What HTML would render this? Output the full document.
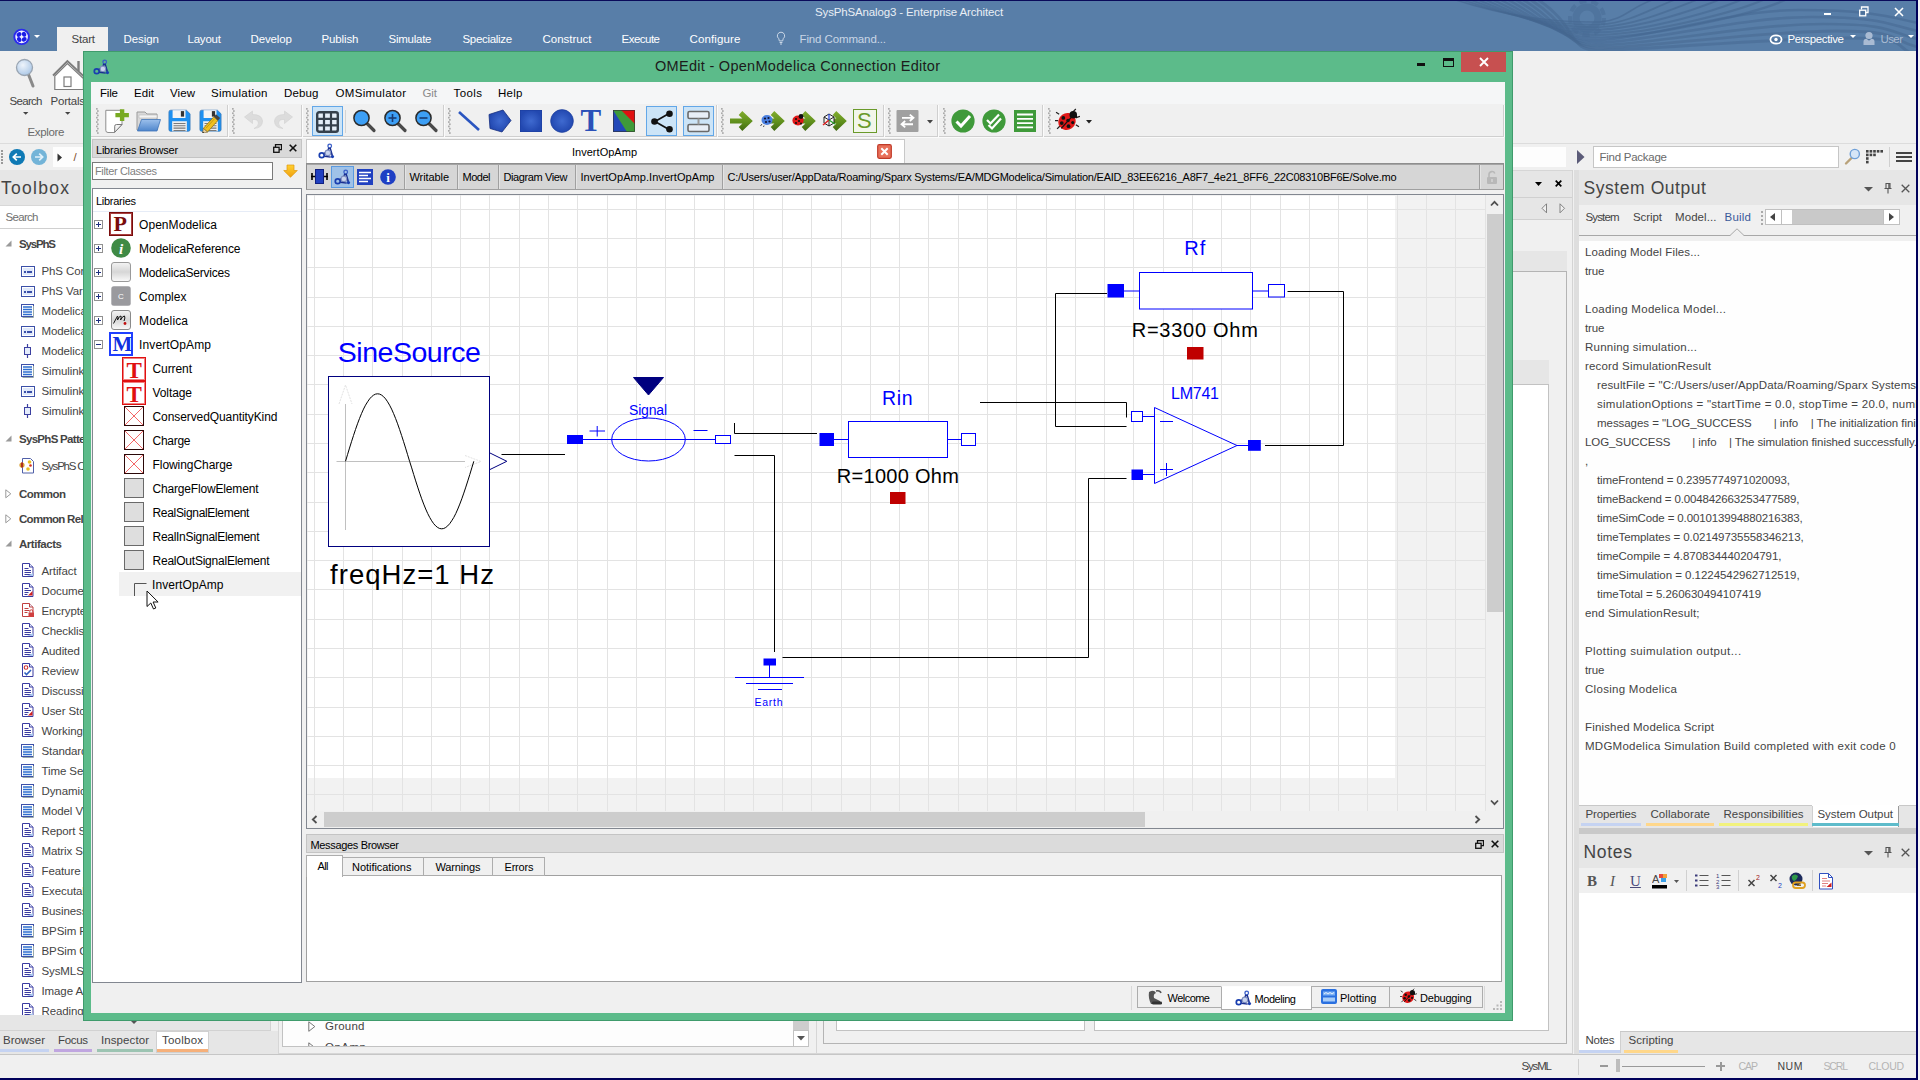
<!DOCTYPE html>
<html><head><meta charset="utf-8"><title>SysPhSAnalog3 - Enterprise Architect</title>
<style>
html,body{margin:0;padding:0;}
body{width:1920px;height:1080px;overflow:hidden;position:relative;background:#f0f0f0;font-family:"Liberation Sans",sans-serif;font-size:12px;}
body div,body svg,.t{position:absolute;box-sizing:border-box;}
.t{white-space:pre;}
</style></head>
<body>
<div style="left:0px;top:0px;width:1920px;height:1080px;background:#f0f0f0;"></div>
<div style="left:0px;top:0px;width:1917px;height:51px;background:#587ea8;"></div>
<div style="left:0px;top:0px;width:1920px;height:1px;background:#0a0a5a;"></div>
<div style="left:57px;top:27px;width:51px;height:24px;background:#f0f0f0;"></div>
<div style="left:0px;top:143px;width:1917px;height:1px;background:#dcdcdc;"></div>
<div style="left:0px;top:144px;width:1917px;height:26px;background:#f0f0f0;"></div>
<div style="left:1916px;top:0px;width:2px;height:1080px;background:#00005a;"></div>
<div style="left:1918px;top:0px;width:2px;height:1080px;background:#f4f4f4;"></div>
<div style="left:0px;top:1054px;width:1916px;height:1px;background:#c6c6c6;"></div>
<div style="left:0px;top:1055px;width:1916px;height:23px;background:#f0f0f0;"></div>
<div style="left:0px;top:1078px;width:1918px;height:2px;background:#00005a;"></div>
<svg style="left:1440px;top:1px;" width="476" height="50" viewBox="0 0 476 50"><g fill="none" stroke="#44668f"><path d="M16.0,-1 C56.0,12.0 105.0,22.0 160,21.0 C185.0,19.0 190.0,6.0 215.0,-2" stroke-width="1.60" opacity="0.60"/><path d="M23.5,-1 C63.5,13.2 107.0,24.6 160,23.6 C191.0,21.6 212.0,6.8 237.0,-2" stroke-width="1.72" opacity="0.59"/><path d="M31.0,-1 C71.0,14.4 109.0,27.2 160,26.2 C197.0,24.2 234.0,7.6 259.0,-2" stroke-width="1.84" opacity="0.58"/><path d="M38.5,-1 C78.5,15.6 111.0,29.8 160,28.8 C203.0,26.8 256.0,8.4 281.0,-2" stroke-width="1.96" opacity="0.56"/><path d="M46.0,-1 C86.0,16.8 113.0,32.4 160,31.4 C209.0,29.4 278.0,9.2 303.0,-2" stroke-width="2.08" opacity="0.55"/><path d="M53.5,-1 C93.5,18.0 115.0,35.0 160,34.0 C215.0,32.0 300.0,10.0 325.0,-2" stroke-width="2.20" opacity="0.54"/><path d="M61.0,-1 C101.0,19.2 117.0,37.6 160,36.6 C221.0,34.6 322.0,10.8 347.0,-2" stroke-width="2.32" opacity="0.53"/><path d="M68.5,-1 C108.5,20.4 119.0,40.2 160,39.2 C215.0,36.2 290.0,9.0 360.0,9.0 S450.0,16.0 478,22.0" stroke-width="2.44" opacity="0.52"/><path d="M76.0,-1 C116.0,21.6 121.0,42.8 160,41.8 C220.0,38.8 302.0,16.0 372.0,16.0 S450.0,24.0 478,30.0" stroke-width="2.56" opacity="0.50"/><path d="M83.5,-1 C123.5,22.8 123.0,45.4 160,44.4 C225.0,41.4 314.0,23.0 384.0,23.0 S450.0,32.0 478,38.0" stroke-width="2.68" opacity="0.49"/><path d="M91.0,-1 C131.0,24.0 125.0,48.0 160,47.0 C230.0,44.0 326.0,30.0 396.0,30.0 S450.0,40.0 478,46.0" stroke-width="2.80" opacity="0.48"/><path d="M98.5,-1 C138.5,25.2 127.0,50.6 160,49.6 C235.0,46.6 338.0,37.0 408.0,37.0 S450.0,48.0 478,54.0" stroke-width="2.92" opacity="0.47"/></g><g opacity=".5"><circle cx="147" cy="17" r="11" fill="none" stroke="#486b95" stroke-width="7"/><circle cx="147" cy="17" r="17" fill="none" stroke="#486b95" stroke-width="4" stroke-dasharray="7,5"/></g></svg>
<span class="t" style="left:815px;top:4.75px;font-size:11.5px;line-height:15.5px;color:#e9eef5;letter-spacing:-0.14px;">SysPhSAnalog3 - Enterprise Architect</span>
<span class="t" style="left:71.5px;top:31.75px;font-size:11.5px;line-height:15.5px;color:#444;letter-spacing:-0.20px;">Start</span>
<span class="t" style="left:123.5px;top:31.75px;font-size:11.5px;line-height:15.5px;color:#fff;letter-spacing:-0.06px;">Design</span>
<span class="t" style="left:187.5px;top:31.75px;font-size:11.5px;line-height:15.5px;color:#fff;letter-spacing:-0.21px;">Layout</span>
<span class="t" style="left:250.5px;top:31.75px;font-size:11.5px;line-height:15.5px;color:#fff;letter-spacing:-0.12px;">Develop</span>
<span class="t" style="left:321.5px;top:31.75px;font-size:11.5px;line-height:15.5px;color:#fff;letter-spacing:-0.12px;">Publish</span>
<span class="t" style="left:388.5px;top:31.75px;font-size:11.5px;line-height:15.5px;color:#fff;letter-spacing:-0.25px;">Simulate</span>
<span class="t" style="left:462.5px;top:31.75px;font-size:11.5px;line-height:15.5px;color:#fff;letter-spacing:-0.32px;">Specialize</span>
<span class="t" style="left:542.5px;top:31.75px;font-size:11.5px;line-height:15.5px;color:#fff;letter-spacing:-0.03px;">Construct</span>
<span class="t" style="left:621.5px;top:31.75px;font-size:11.5px;line-height:15.5px;color:#fff;letter-spacing:-0.51px;">Execute</span>
<span class="t" style="left:689.5px;top:31.75px;font-size:11.5px;line-height:15.5px;color:#fff;letter-spacing:0.14px;">Configure</span>
<span class="t" style="left:799.5px;top:31.75px;font-size:11.5px;line-height:15.5px;color:#c9d6e6;letter-spacing:-0.12px;">Find Command...</span>
<svg style="left:776px;top:31px;" width="10" height="15" viewBox="0 0 10 15"><path d="M5,1.2a3.6,3.6 0 0 1 2.2,6.5 l-.5,2.2 h-3.4 l-.5,-2.2 A3.6,3.6 0 0 1 5,1.2z" fill="none" stroke="#c9d6e6" stroke-width="1"/><path d="M3.6,11.5h2.8M4,13h2" stroke="#c9d6e6" stroke-width="1"/></svg>
<svg style="left:13px;top:28px;" width="18" height="18" viewBox="0 0 18 18"><circle cx="8.6" cy="8.9" r="8.2" fill="#2a2aee"/><circle cx="8.6" cy="8.9" r="6.3" fill="#f4f4ff"/><g fill="#1c1ce8"><ellipse cx="6" cy="6.5" rx="2.6" ry="2.1" transform="rotate(-35 6 6.5)"/><ellipse cx="11" cy="6.300" rx="2.100" ry="2.600" transform="rotate(-35 11 6.300)"/><ellipse cx="11.200" cy="11.300" rx="2.600" ry="2.100" transform="rotate(-35 11.200 11.300)"/><ellipse cx="6.200" cy="11.500" rx="2.100" ry="2.600" transform="rotate(-35 6.200 11.500)"/></g></svg>
<svg style="left:34px;top:35px;" width="7" height="4" viewBox="0 0 7 4"><path d="M0,0h6l-3,3z" fill="#fff"/></svg>
<svg style="left:1769px;top:32px;" width="14" height="14" viewBox="0 0 14 14"><ellipse cx="7" cy="7.5" rx="5.6" ry="4.2" fill="none" stroke="#fff" stroke-width="1.7"/><circle cx="7" cy="7.5" r="1.7" fill="#fff"/></svg>
<span class="t" style="left:1787.5px;top:31.75px;font-size:11.5px;line-height:15.5px;color:#fff;letter-spacing:-0.36px;">Perspective</span>
<svg style="left:1850px;top:35px;" width="7" height="4" viewBox="0 0 7 4"><path d="M0,0h6l-3,3z" fill="#fff"/></svg>
<svg style="left:1863px;top:31px;" width="12" height="15" viewBox="0 0 12 15"><circle cx="6" cy="4.5" r="3.6" fill="#a9bbd3"/><path d="M0.5,14 v-3.5 q0,-2.5 3,-2.8 l2.5,2 l2.5,-2 q3,.3 3,2.8 v3.5z" fill="#a9bbd3"/></svg>
<span class="t" style="left:1880.5px;top:31.75px;font-size:11.5px;line-height:15.5px;color:#a9bbd3;letter-spacing:-0.59px;">User</span>
<svg style="left:1908px;top:35px;" width="7" height="4" viewBox="0 0 7 4"><path d="M0,0h6l-3,3z" fill="#fff"/></svg>
<div style="left:1824px;top:13px;width:7px;height:2px;background:#fff;"></div>
<svg style="left:1859px;top:6px;" width="10" height="11" viewBox="0 0 10 11"><path d="M2.5,3.5v-2.5h6.5v5.5h-2.5" fill="none" stroke="#fff" stroke-width="1.3"/><rect x="0.7" y="4.2" width="6" height="5.6" fill="none" stroke="#fff" stroke-width="1.3"/></svg>
<svg style="left:1894px;top:7px;" width="10" height="10" viewBox="0 0 10 10"><path d="M1,1l8,8M9,1l-8,8" stroke="#fff" stroke-width="1.6"/></svg>
<svg style="left:12px;top:56px;" width="26" height="36" viewBox="0 0 26 36"><defs><radialGradient id="lens" cx=".4" cy=".35" r=".7"><stop offset="0" stop-color="#eef4fb"/><stop offset="1" stop-color="#a9c6e6"/></radialGradient></defs>
      <path d="M16.5,18.5 L21,30" stroke="#8a8a8a" stroke-width="3" stroke-linecap="round"/>
      <circle cx="12.5" cy="11.5" r="8" fill="url(#lens)" stroke="#9aa5b2" stroke-width="1.3"/></svg>
<svg style="left:50px;top:56px;" width="34" height="36" viewBox="0 0 34 36"><path d="M4.8,33.5 v-13.5 l12.600,-12.500 l16,15 v11z" fill="#fff" stroke="#7d7d7d" stroke-width="1.2"/>
      <path d="M3,19.500 L17.400,5 L34,20.500" fill="none" stroke="#7d7d7d" stroke-width="1.8"/>
      <path d="M28.500,5 v10" stroke="#7d7d7d" stroke-width="2.4"/>
      <rect x="14" y="21" width="7" height="9.500" fill="#fff" stroke="#7d7d7d" stroke-width="1.2"/></svg>
<span class="t" style="left:9.5px;top:93.75px;font-size:11.5px;line-height:15.5px;color:#444;letter-spacing:-0.69px;">Search</span>
<span class="t" style="left:50.5px;top:93.75px;font-size:11.5px;line-height:15.5px;color:#444;letter-spacing:-0.22px;">Portals</span>
<svg style="left:23px;top:112px;" width="6" height="4" viewBox="0 0 6 4"><path d="M0,0h5.4l-2.7,2.8z" fill="#444"/></svg>
<svg style="left:65px;top:112px;" width="6" height="4" viewBox="0 0 6 4"><path d="M0,0h5.4l-2.7,2.8z" fill="#444"/></svg>
<span class="t" style="left:27.5px;top:125.25px;font-size:11.5px;line-height:15.5px;color:#6a6a6a;letter-spacing:-0.33px;">Explore</span>
<div style="left:1px;top:150px;width:2px;height:1.5px;background:#9a9a9a;"></div>
<div style="left:1px;top:153px;width:2px;height:1.5px;background:#9a9a9a;"></div>
<div style="left:1px;top:156px;width:2px;height:1.5px;background:#9a9a9a;"></div>
<div style="left:1px;top:159px;width:2px;height:1.5px;background:#9a9a9a;"></div>
<div style="left:1px;top:162px;width:2px;height:1.5px;background:#9a9a9a;"></div>
<svg style="left:9px;top:149px;" width="16" height="16" viewBox="0 0 16 16"><circle cx="8" cy="8" r="8" fill="#0f7ab5"/><path d="M12,8H4.5M7.8,4.6L4.3,8l3.5,3.4" fill="none" stroke="#fff" stroke-width="1.7"/></svg>
<svg style="left:31px;top:149px;" width="16" height="16" viewBox="0 0 16 16"><circle cx="8" cy="8" r="8" fill="#73b4d8"/><path d="M4,8h7.5M8.2,4.6L11.7,8l-3.5,3.4" fill="none" stroke="#dff0fa" stroke-width="1.7"/></svg>
<div style="left:53px;top:147px;width:1513px;height:20px;background:#fdfdfd;"></div>
<svg style="left:57px;top:153px;" width="6" height="9" viewBox="0 0 6 9"><path d="M0.5,0.5v8l4.5,-4z" fill="#333"/></svg>
<span class="t" style="left:73.5px;top:149.75px;font-size:11.5px;line-height:15.5px;color:#7a4a2a;">/</span>
<svg style="left:1577px;top:150px;" width="8" height="14" viewBox="0 0 8 14"><path d="M0,0v14l7.5,-7z" fill="#5b5b78"/></svg>
<div style="left:1593px;top:146px;width:246px;height:22px;background:#fff;border:1px solid #c6c6c6;"></div>
<span class="t" style="left:1599.5px;top:149.75px;font-size:11.5px;line-height:15.5px;color:#6a6a6a;letter-spacing:-0.26px;">Find Package</span>
<svg style="left:1843px;top:148px;" width="18" height="18" viewBox="0 0 18 18"><path d="M3,15.5l6.5,-6.5" stroke="#b9a27a" stroke-width="2.4" stroke-linecap="round"/><circle cx="11.8" cy="6" r="4.6" fill="#d6e6f7" stroke="#6fa0d8" stroke-width="1.4"/></svg>
<svg style="left:1866px;top:150px;" width="18" height="14" viewBox="0 0 18 14"><rect x="0" y="0" width="2.6" height="2.6" fill="#444"/><rect x="3.6" y="0" width="2.6" height="2.6" fill="#444"/><rect x="7.2" y="0" width="2.6" height="2.6" fill="#444"/><rect x="10.8" y="0" width="2.6" height="2.6" fill="#444"/><rect x="14.4" y="0" width="2.6" height="2.6" fill="#444"/><rect x="0" y="3.6" width="2.6" height="2.6" fill="#444"/><rect x="0" y="7.2" width="2.6" height="2.6" fill="#444"/><rect x="0" y="10.8" width="2.6" height="2.6" fill="#444"/><rect x="3.6" y="3.6" width="2.6" height="2.6" fill="#444"/><rect x="7.2" y="3.6" width="2.6" height="2.6" fill="#444"/></svg>
<div style="left:1889px;top:147px;width:1px;height:20px;background:#d0d0d0;"></div>
<div style="left:1896px;top:152px;width:16px;height:2px;background:#444;"></div>
<div style="left:1896px;top:156px;width:16px;height:2px;background:#444;"></div>
<div style="left:1896px;top:160px;width:16px;height:2px;background:#444;"></div>
<div style="left:0;top:170px;width:83px;height:884px;overflow:hidden;">
<div style="left:0px;top:0px;width:83px;height:36px;background:#e6e6e6;"></div>
<div style="left:0px;top:35px;width:83px;height:1px;background:#d8d8d8;"></div>
<span class="t" style="left:1px;top:7.75px;font-size:17.5px;line-height:21.5px;color:#444;letter-spacing:1.28px;">Toolbox</span>
<div style="left:0px;top:36px;width:83px;height:22px;background:#fff;"></div>
<span class="t" style="left:5.5px;top:39.75px;font-size:11.5px;line-height:15.5px;color:#707070;letter-spacing:-0.69px;">Search</span>
<div style="left:0px;top:58px;width:83px;height:1px;background:#d0d0d0;"></div>
<div style="left:0px;top:59px;width:83px;height:786px;background:#fff;"></div>
<svg style="left:5px;top:70px;" width="7" height="7" viewBox="0 0 7 7"><path d="M6.5,.5v6h-6z" fill="#9a9a9a"/></svg>
<span class="t" style="left:19px;top:67.25px;font-size:11.5px;line-height:15.5px;color:#444;font-weight:bold;letter-spacing:-1.17px;">SysPhS</span>
<svg style="left:21px;top:96px;" width="14" height="12" viewBox="0 0 14 12"><rect x=".5" y=".5" width="13" height="10" fill="#fff" stroke="#3c50a8"/><rect x="2" y="2" width="10" height="7" fill="#dfe8fa"/><rect x="3" y="5" width="2" height="2" fill="#3c50a8"/><rect x="6" y="5" width="5" height="2" fill="#3c50a8"/></svg>
<span class="t" style="left:41.5px;top:93.75px;font-size:11.5px;line-height:15.5px;color:#444;letter-spacing:-0.1px;">PhS Constant</span>
<svg style="left:21px;top:116px;" width="14" height="12" viewBox="0 0 14 12"><rect x=".5" y=".5" width="13" height="10" fill="#fff" stroke="#3c50a8"/><rect x="2" y="2" width="10" height="7" fill="#dfe8fa"/><rect x="3" y="5" width="2" height="2" fill="#3c50a8"/><rect x="6" y="5" width="5" height="2" fill="#3c50a8"/></svg>
<span class="t" style="left:41.5px;top:113.75px;font-size:11.5px;line-height:15.5px;color:#444;letter-spacing:-0.1px;">PhS Variable</span>
<svg style="left:21px;top:134px;" width="14" height="14" viewBox="0 0 14 14"><rect x=".5" y=".5" width="12" height="12" fill="#fff" stroke="#3c50a8"/><path d="M2,3h9M2,5.5h9M2,8h9M2,10.5h9" stroke="#2f6fd0" stroke-width="1.3"/><path d="M12.5,2v11.5h-11" fill="none" stroke="#9aa" stroke-width="1"/></svg>
<span class="t" style="left:41.5px;top:133.75px;font-size:11.5px;line-height:15.5px;color:#444;letter-spacing:-0.1px;">ModelicaBlock</span>
<svg style="left:21px;top:156px;" width="14" height="12" viewBox="0 0 14 12"><rect x=".5" y=".5" width="13" height="10" fill="#fff" stroke="#3c50a8"/><rect x="2" y="2" width="10" height="7" fill="#dfe8fa"/><rect x="3" y="5" width="2" height="2" fill="#3c50a8"/><rect x="6" y="5" width="5" height="2" fill="#3c50a8"/></svg>
<span class="t" style="left:41.5px;top:153.75px;font-size:11.5px;line-height:15.5px;color:#444;letter-spacing:-0.1px;">ModelicaParameter</span>
<svg style="left:21px;top:174px;" width="14" height="14" viewBox="0 0 14 14"><path d="M6.5,0v14" stroke="#3c40a0" stroke-width="1.2"/><rect x="3.5" y="3.5" width="6" height="7" fill="#e4ecfb" stroke="#3c40a0"/></svg>
<span class="t" style="left:41.5px;top:173.75px;font-size:11.5px;line-height:15.5px;color:#444;letter-spacing:-0.1px;">ModelicaPort</span>
<svg style="left:21px;top:194px;" width="14" height="14" viewBox="0 0 14 14"><rect x=".5" y=".5" width="12" height="12" fill="#fff" stroke="#3c50a8"/><path d="M2,3h9M2,5.5h9M2,8h9M2,10.5h9" stroke="#2f6fd0" stroke-width="1.3"/><path d="M12.5,2v11.5h-11" fill="none" stroke="#9aa" stroke-width="1"/></svg>
<span class="t" style="left:41.5px;top:193.75px;font-size:11.5px;line-height:15.5px;color:#444;letter-spacing:-0.1px;">SimulinkBlock</span>
<svg style="left:21px;top:216px;" width="14" height="12" viewBox="0 0 14 12"><rect x=".5" y=".5" width="13" height="10" fill="#fff" stroke="#3c50a8"/><rect x="2" y="2" width="10" height="7" fill="#dfe8fa"/><rect x="3" y="5" width="2" height="2" fill="#3c50a8"/><rect x="6" y="5" width="5" height="2" fill="#3c50a8"/></svg>
<span class="t" style="left:41.5px;top:213.75px;font-size:11.5px;line-height:15.5px;color:#444;letter-spacing:-0.1px;">SimulinkParameter</span>
<svg style="left:21px;top:234px;" width="14" height="14" viewBox="0 0 14 14"><path d="M6.5,0v14" stroke="#3c40a0" stroke-width="1.2"/><rect x="3.5" y="3.5" width="6" height="7" fill="#e4ecfb" stroke="#3c40a0"/></svg>
<span class="t" style="left:41.5px;top:233.75px;font-size:11.5px;line-height:15.5px;color:#444;letter-spacing:-0.1px;">SimulinkPort</span>
<svg style="left:5px;top:265px;" width="7" height="7" viewBox="0 0 7 7"><path d="M6.5,.5v6h-6z" fill="#9a9a9a"/></svg>
<span class="t" style="left:19px;top:262.25px;font-size:11.5px;line-height:15.5px;color:#444;font-weight:bold;letter-spacing:-0.7px;">SysPhS Patterns</span>
<svg style="left:19px;top:288px;" width="16" height="16" viewBox="0 0 16 16"><path d="M3.5,.5h8l3,3v11.5h-11z" fill="#fff" stroke="#5060a8"/><circle cx="3" cy="7" r="2.6" fill="#d8a030"/><circle cx="10.5" cy="4" r="1.8" fill="#e8c020"/><circle cx="9" cy="11" r="1.8" fill="#e8c020"/><path d="M3,4.5v5" stroke="#b03020" stroke-width="2"/><circle cx="11.5" cy="7.5" r="1.3" fill="#d03020"/></svg>
<span class="t" style="left:41.5px;top:288.75px;font-size:11.5px;line-height:15.5px;color:#444;letter-spacing:-1.18px;">SysPhS Component</span>
<svg style="left:5px;top:319px;" width="7" height="10" viewBox="0 0 7 10"><path d="M.8,.8v8l5,-4z" fill="#fff" stroke="#9a9a9a"/></svg>
<span class="t" style="left:19px;top:317.25px;font-size:11.5px;line-height:15.5px;color:#444;font-weight:bold;letter-spacing:-0.57px;">Common</span>
<svg style="left:5px;top:344px;" width="7" height="10" viewBox="0 0 7 10"><path d="M.8,.8v8l5,-4z" fill="#fff" stroke="#9a9a9a"/></svg>
<span class="t" style="left:19px;top:342.25px;font-size:11.5px;line-height:15.5px;color:#444;font-weight:bold;letter-spacing:-0.7px;">Common Relationships</span>
<svg style="left:5px;top:370px;" width="7" height="7" viewBox="0 0 7 7"><path d="M6.5,.5v6h-6z" fill="#9a9a9a"/></svg>
<span class="t" style="left:19px;top:367.25px;font-size:11.5px;line-height:15.5px;color:#444;font-weight:bold;letter-spacing:-0.46px;">Artifacts</span>
<svg style="left:21px;top:393px;" width="14" height="15" viewBox="0 0 14 15"><path d="M1.5,.5h7l3.5,3.5v9.5h-10.5z" fill="#fff" stroke="#3a3aa0"/><path d="M8.5,.5v3.5h3.5" fill="#dfe6f7" stroke="#3a3aa0"/><path d="M3.5,5.5h4M3.5,7.5h6.5M3.5,9.5h6.5M3.5,11.5h6.5" stroke="#3a3aa0" stroke-width="1"/><path d="M6,13l6,-3v3z" fill="#a9c6ee"/></svg>
<span class="t" style="left:41.5px;top:393.75px;font-size:11.5px;line-height:15.5px;color:#444;letter-spacing:-0.1px;">Artifact</span>
<svg style="left:21px;top:413px;" width="14" height="15" viewBox="0 0 14 15"><path d="M1.5,.5h7l3.5,3.5v9.5h-10.5z" fill="#fff" stroke="#3a3aa0"/><path d="M8.5,.5v3.5h3.5" fill="#dfe6f7" stroke="#3a3aa0"/><path d="M3.5,5.5h4M3.5,7.5h6.5M3.5,9.5h4M3.5,11.5h3" stroke="#3a3aa0" stroke-width="1"/><path d="M7,12.5l4.5,-4.5v4.5z" fill="#d02020"/></svg>
<span class="t" style="left:41.5px;top:413.75px;font-size:11.5px;line-height:15.5px;color:#444;letter-spacing:-0.1px;">Document</span>
<svg style="left:21px;top:433px;" width="14" height="15" viewBox="0 0 14 15"><path d="M1.5,.5h7l3.5,3.5v9.5h-10.5z" fill="#fff" stroke="#c04040"/><path d="M8.5,.5v3.5h3.5" fill="#dfe6f7" stroke="#c04040"/><path d="M3.5,5.5h4M3.5,7.5h5M3.5,9.5h3" stroke="#c04040" stroke-width="1"/><rect x="7.5" y="9.5" width="5.5" height="4.5" fill="#d04040"/><path d="M8.8,9.5v-1.2a1.5,1.5 0 0 1 3,0v1.2" fill="none" stroke="#d04040"/></svg>
<span class="t" style="left:41.5px;top:433.75px;font-size:11.5px;line-height:15.5px;color:#444;letter-spacing:-0.1px;">Encrypted</span>
<svg style="left:21px;top:453px;" width="14" height="15" viewBox="0 0 14 15"><path d="M1.5,.5h7l3.5,3.5v9.5h-10.5z" fill="#fff" stroke="#3a3aa0"/><path d="M8.5,.5v3.5h3.5" fill="#dfe6f7" stroke="#3a3aa0"/><path d="M3.5,5.5h4M3.5,7.5h6.5M3.5,9.5h6.5M3.5,11.5h6.5" stroke="#3a3aa0" stroke-width="1"/><path d="M6,13l6,-3v3z" fill="#a9c6ee"/></svg>
<span class="t" style="left:41.5px;top:453.75px;font-size:11.5px;line-height:15.5px;color:#444;letter-spacing:-0.1px;">Checklist</span>
<svg style="left:21px;top:473px;" width="14" height="15" viewBox="0 0 14 15"><path d="M1.5,.5h7l3.5,3.5v9.5h-10.5z" fill="#fff" stroke="#3a3aa0"/><path d="M8.5,.5v3.5h3.5" fill="#dfe6f7" stroke="#3a3aa0"/><path d="M3.5,5.5h4M3.5,7.5h6.5M3.5,9.5h6.5M3.5,11.5h6.5" stroke="#3a3aa0" stroke-width="1"/><path d="M6,13l6,-3v3z" fill="#a9c6ee"/></svg>
<span class="t" style="left:41.5px;top:473.75px;font-size:11.5px;line-height:15.5px;color:#444;letter-spacing:-0.1px;">Audited</span>
<svg style="left:21px;top:493px;" width="14" height="15" viewBox="0 0 14 15"><path d="M1.5,.5h7l3.5,3.5v9.5h-10.5z" fill="#fff" stroke="#3a3aa0"/><path d="M8.5,.5v3.5h3.5" fill="#dfe6f7" stroke="#3a3aa0"/><circle cx="5" cy="4.5" r="1.8" fill="none" stroke="#d03030" stroke-width="1.1"/><path d="M3.5,9.5l2,2l4.5,-4.5" fill="none" stroke="#3060c0" stroke-width="1.6"/></svg>
<span class="t" style="left:41.5px;top:493.75px;font-size:11.5px;line-height:15.5px;color:#444;letter-spacing:-0.1px;">Review</span>
<svg style="left:21px;top:513px;" width="14" height="15" viewBox="0 0 14 15"><path d="M1.5,.5h7l3.5,3.5v9.5h-10.5z" fill="#fff" stroke="#3a3aa0"/><path d="M8.5,.5v3.5h3.5" fill="#dfe6f7" stroke="#3a3aa0"/><path d="M3.5,5.5h4M3.5,7.5h6.5M3.5,9.5h6.5M3.5,11.5h6.5" stroke="#3a3aa0" stroke-width="1"/><path d="M6,13l6,-3v3z" fill="#a9c6ee"/></svg>
<span class="t" style="left:41.5px;top:513.75px;font-size:11.5px;line-height:15.5px;color:#444;letter-spacing:-0.1px;">Discussion</span>
<svg style="left:21px;top:533px;" width="14" height="15" viewBox="0 0 14 15"><path d="M1.5,.5h7l3.5,3.5v9.5h-10.5z" fill="#fff" stroke="#3a3aa0"/><path d="M8.5,.5v3.5h3.5" fill="#dfe6f7" stroke="#3a3aa0"/><path d="M3.5,5.5h4M3.5,7.5h6.5M3.5,9.5h4M3.5,11.5h3" stroke="#3a3aa0" stroke-width="1"/><path d="M7,12.5l4.5,-4.5v4.5z" fill="#d02020"/></svg>
<span class="t" style="left:41.5px;top:533.75px;font-size:11.5px;line-height:15.5px;color:#444;letter-spacing:-0.1px;">User Story</span>
<svg style="left:21px;top:553px;" width="14" height="15" viewBox="0 0 14 15"><path d="M1.5,.5h7l3.5,3.5v9.5h-10.5z" fill="#fff" stroke="#3a3aa0"/><path d="M8.5,.5v3.5h3.5" fill="#dfe6f7" stroke="#3a3aa0"/><path d="M3.5,5.5h4M3.5,7.5h6.5M3.5,9.5h6.5M3.5,11.5h6.5" stroke="#3a3aa0" stroke-width="1"/><path d="M6,13l6,-3v3z" fill="#a9c6ee"/></svg>
<span class="t" style="left:41.5px;top:553.75px;font-size:11.5px;line-height:15.5px;color:#444;letter-spacing:-0.1px;">Working Set</span>
<svg style="left:21px;top:574px;" width="14" height="14" viewBox="0 0 14 14"><rect x=".5" y=".5" width="12" height="12" fill="#fff" stroke="#3c50a8"/><path d="M2,3h9M2,5.5h9M2,8h9M2,10.5h9" stroke="#2f6fd0" stroke-width="1.3"/><path d="M12.5,2v11.5h-11" fill="none" stroke="#9aa" stroke-width="1"/></svg>
<span class="t" style="left:41.5px;top:573.75px;font-size:11.5px;line-height:15.5px;color:#444;letter-spacing:-0.1px;">Standard Chart</span>
<svg style="left:21px;top:594px;" width="14" height="14" viewBox="0 0 14 14"><rect x=".5" y=".5" width="12" height="12" fill="#fff" stroke="#3c50a8"/><path d="M2,3h9M2,5.5h9M2,8h9M2,10.5h9" stroke="#2f6fd0" stroke-width="1.3"/><path d="M12.5,2v11.5h-11" fill="none" stroke="#9aa" stroke-width="1"/></svg>
<span class="t" style="left:41.5px;top:593.75px;font-size:11.5px;line-height:15.5px;color:#444;letter-spacing:-0.1px;">Time Series</span>
<svg style="left:21px;top:614px;" width="14" height="14" viewBox="0 0 14 14"><rect x=".5" y=".5" width="12" height="12" fill="#fff" stroke="#3c50a8"/><path d="M2,3h9M2,5.5h9M2,8h9M2,10.5h9" stroke="#2f6fd0" stroke-width="1.3"/><path d="M12.5,2v11.5h-11" fill="none" stroke="#9aa" stroke-width="1"/></svg>
<span class="t" style="left:41.5px;top:613.75px;font-size:11.5px;line-height:15.5px;color:#444;letter-spacing:-0.1px;">Dynamic Chart</span>
<svg style="left:21px;top:634px;" width="14" height="14" viewBox="0 0 14 14"><rect x=".5" y=".5" width="12" height="12" fill="#fff" stroke="#3c50a8"/><path d="M2,3h9M2,5.5h9M2,8h9M2,10.5h9" stroke="#2f6fd0" stroke-width="1.3"/><path d="M12.5,2v11.5h-11" fill="none" stroke="#9aa" stroke-width="1"/></svg>
<span class="t" style="left:41.5px;top:633.75px;font-size:11.5px;line-height:15.5px;color:#444;letter-spacing:-0.1px;">Model View</span>
<svg style="left:21px;top:653px;" width="14" height="15" viewBox="0 0 14 15"><path d="M1.5,.5h7l3.5,3.5v9.5h-10.5z" fill="#fff" stroke="#3a3aa0"/><path d="M8.5,.5v3.5h3.5" fill="#dfe6f7" stroke="#3a3aa0"/><path d="M3.5,5.5h4M3.5,7.5h6.5M3.5,9.5h6.5M3.5,11.5h6.5" stroke="#3a3aa0" stroke-width="1"/><path d="M6,13l6,-3v3z" fill="#a9c6ee"/></svg>
<span class="t" style="left:41.5px;top:653.75px;font-size:11.5px;line-height:15.5px;color:#444;letter-spacing:-0.1px;">Report Spec</span>
<svg style="left:21px;top:673px;" width="14" height="15" viewBox="0 0 14 15"><path d="M1.5,.5h7l3.5,3.5v9.5h-10.5z" fill="#fff" stroke="#3a3aa0"/><path d="M8.5,.5v3.5h3.5" fill="#dfe6f7" stroke="#3a3aa0"/><path d="M3.5,5.5h4M3.5,7.5h6.5M3.5,9.5h6.5M3.5,11.5h6.5" stroke="#3a3aa0" stroke-width="1"/><path d="M6,13l6,-3v3z" fill="#a9c6ee"/></svg>
<span class="t" style="left:41.5px;top:673.75px;font-size:11.5px;line-height:15.5px;color:#444;letter-spacing:-0.1px;">Matrix Spec</span>
<svg style="left:21px;top:693px;" width="14" height="15" viewBox="0 0 14 15"><path d="M1.5,.5h7l3.5,3.5v9.5h-10.5z" fill="#fff" stroke="#3a3aa0"/><path d="M8.5,.5v3.5h3.5" fill="#dfe6f7" stroke="#3a3aa0"/><path d="M3.5,5.5h4M3.5,7.5h6.5M3.5,9.5h6.5M3.5,11.5h6.5" stroke="#3a3aa0" stroke-width="1"/><path d="M6,13l6,-3v3z" fill="#a9c6ee"/></svg>
<span class="t" style="left:41.5px;top:693.75px;font-size:11.5px;line-height:15.5px;color:#444;letter-spacing:-0.1px;">Feature</span>
<svg style="left:21px;top:713px;" width="14" height="15" viewBox="0 0 14 15"><path d="M1.5,.5h7l3.5,3.5v9.5h-10.5z" fill="#fff" stroke="#3a3aa0"/><path d="M8.5,.5v3.5h3.5" fill="#dfe6f7" stroke="#3a3aa0"/><path d="M3.5,5.5h4M3.5,7.5h6.5M3.5,9.5h6.5M3.5,11.5h6.5" stroke="#3a3aa0" stroke-width="1"/><path d="M6,13l6,-3v3z" fill="#a9c6ee"/></svg>
<span class="t" style="left:41.5px;top:713.75px;font-size:11.5px;line-height:15.5px;color:#444;letter-spacing:-0.1px;">Executable</span>
<svg style="left:21px;top:733px;" width="14" height="15" viewBox="0 0 14 15"><path d="M1.5,.5h7l3.5,3.5v9.5h-10.5z" fill="#fff" stroke="#3a3aa0"/><path d="M8.5,.5v3.5h3.5" fill="#dfe6f7" stroke="#3a3aa0"/><path d="M3.5,5.5h4M3.5,7.5h6.5M3.5,9.5h6.5M3.5,11.5h6.5" stroke="#3a3aa0" stroke-width="1"/><path d="M6,13l6,-3v3z" fill="#a9c6ee"/></svg>
<span class="t" style="left:41.5px;top:733.75px;font-size:11.5px;line-height:15.5px;color:#444;letter-spacing:-0.1px;">Business Rule</span>
<svg style="left:21px;top:754px;" width="14" height="14" viewBox="0 0 14 14"><rect x=".5" y=".5" width="12" height="12" fill="#fff" stroke="#3c50a8"/><path d="M2,3h9M2,5.5h9M2,8h9M2,10.5h9" stroke="#2f6fd0" stroke-width="1.3"/><path d="M12.5,2v11.5h-11" fill="none" stroke="#9aa" stroke-width="1"/></svg>
<span class="t" style="left:41.5px;top:753.75px;font-size:11.5px;line-height:15.5px;color:#444;letter-spacing:-0.1px;">BPSim Result</span>
<svg style="left:21px;top:774px;" width="14" height="14" viewBox="0 0 14 14"><rect x=".5" y=".5" width="12" height="12" fill="#fff" stroke="#3c50a8"/><path d="M2,3h9M2,5.5h9M2,8h9M2,10.5h9" stroke="#2f6fd0" stroke-width="1.3"/><path d="M12.5,2v11.5h-11" fill="none" stroke="#9aa" stroke-width="1"/></svg>
<span class="t" style="left:41.5px;top:773.75px;font-size:11.5px;line-height:15.5px;color:#444;letter-spacing:-0.1px;">BPSim Config</span>
<svg style="left:21px;top:793px;" width="14" height="15" viewBox="0 0 14 15"><path d="M1.5,.5h7l3.5,3.5v9.5h-10.5z" fill="#fff" stroke="#3a3aa0"/><path d="M8.5,.5v3.5h3.5" fill="#dfe6f7" stroke="#3a3aa0"/><path d="M3.5,5.5h4M3.5,7.5h6.5M3.5,9.5h6.5M3.5,11.5h6.5" stroke="#3a3aa0" stroke-width="1"/><path d="M6,13l6,-3v3z" fill="#a9c6ee"/></svg>
<span class="t" style="left:41.5px;top:793.75px;font-size:11.5px;line-height:15.5px;color:#444;letter-spacing:-0.1px;">SysMLSim</span>
<svg style="left:21px;top:813px;" width="14" height="15" viewBox="0 0 14 15"><path d="M1.5,.5h7l3.5,3.5v9.5h-10.5z" fill="#fff" stroke="#3a3aa0"/><path d="M8.5,.5v3.5h3.5" fill="#dfe6f7" stroke="#3a3aa0"/><path d="M3.5,5.5h4M3.5,7.5h6.5M3.5,9.5h6.5M3.5,11.5h6.5" stroke="#3a3aa0" stroke-width="1"/><path d="M6,13l6,-3v3z" fill="#a9c6ee"/></svg>
<span class="t" style="left:41.5px;top:813.75px;font-size:11.5px;line-height:15.5px;color:#444;letter-spacing:-0.1px;">Image Asset</span>
<svg style="left:21px;top:833px;" width="14" height="15" viewBox="0 0 14 15"><path d="M1.5,.5h7l3.5,3.5v9.5h-10.5z" fill="#fff" stroke="#3a3aa0"/><path d="M8.5,.5v3.5h3.5" fill="#dfe6f7" stroke="#3a3aa0"/><path d="M3.5,5.5h4M3.5,7.5h6.5M3.5,9.5h6.5M3.5,11.5h6.5" stroke="#3a3aa0" stroke-width="1"/><path d="M6,13l6,-3v3z" fill="#a9c6ee"/></svg>
<span class="t" style="left:41.5px;top:833.75px;font-size:11.5px;line-height:15.5px;color:#444;letter-spacing:-0.1px;">Reading List</span>
<div style="left:0px;top:845px;width:83px;height:39px;background:#e6e6e6;"></div>
</div>
<div style="left:0px;top:1015px;width:270px;height:16px;background:#e6e6e6;"></div>
<div style="left:0px;top:1030px;width:270px;height:1px;background:#d2d2d2;"></div>
<div style="left:270px;top:1020px;width:1px;height:11px;background:#d2d2d2;"></div>
<svg style="left:131px;top:1021px;" width="7" height="4" viewBox="0 0 7 4"><path d="M0,0h6l-3,3z" fill="#555"/></svg>
<div style="left:0px;top:1031px;width:278px;height:23px;background:#e6e6e6;"></div>
<span class="t" style="left:3px;top:1032.75px;font-size:11.5px;line-height:15.5px;color:#444;letter-spacing:-0.03px;">Browser</span>
<div style="left:0px;top:1049px;width:49px;height:3px;background:#c5d3f2;"></div>
<span class="t" style="left:58px;top:1032.75px;font-size:11.5px;line-height:15.5px;color:#444;letter-spacing:-0.33px;">Focus</span>
<div style="left:54px;top:1049px;width:38px;height:3px;background:#c0a6e0;"></div>
<span class="t" style="left:101px;top:1032.75px;font-size:11.5px;line-height:15.5px;color:#444;letter-spacing:0.09px;">Inspector</span>
<div style="left:97px;top:1049px;width:56px;height:3px;background:#9cc4b2;"></div>
<div style="left:156px;top:1031px;width:53px;height:22px;background:#fff;border:1px solid #d0d0d0;"></div>
<span class="t" style="left:162px;top:1032.75px;font-size:11.5px;line-height:15.5px;color:#444;letter-spacing:0.23px;">Toolbox</span>
<div style="left:157px;top:1049px;width:51px;height:3px;background:#f6b07a;"></div>
<div style="left:1574px;top:170px;width:5px;height:884px;background:#dedede;"></div>
<div style="left:1579px;top:170px;width:337px;height:35px;background:#e6e6e6;"></div>
<span class="t" style="left:1583.5px;top:177.75px;font-size:17.5px;line-height:21.5px;color:#444;letter-spacing:0.56px;">System Output</span>
<svg style="left:1864px;top:187px;" width="10" height="5.5" viewBox="0 0 10 5.5"><path d="M0,0h9l-4.5,4.5z" fill="#555"/></svg>
<svg style="left:1884px;top:183px;" width="8" height="11" viewBox="0 0 8 11"><path d="M2,.5h4v5h-4z M.5,5.5h7 M4,5.5v5" fill="none" stroke="#555" stroke-width="1.1"/><path d="M5,1v4.5" stroke="#555" stroke-width="1.4"/></svg>
<svg style="left:1901px;top:184px;" width="10" height="10" viewBox="0 0 10 10"><path d="M.7,.7l7.6,7.6M8.3,.7l-7.6,7.6" stroke="#555" stroke-width="1.3"/></svg>
<div style="left:1579px;top:205px;width:337px;height:36px;background:#f0f0f0;"></div>
<span class="t" style="left:1585.5px;top:209.75px;font-size:11.5px;line-height:15.5px;color:#444;letter-spacing:-0.87px;">System</span>
<span class="t" style="left:1633px;top:209.75px;font-size:11.5px;line-height:15.5px;color:#444;letter-spacing:-0.08px;">Script</span>
<span class="t" style="left:1675px;top:209.75px;font-size:11.5px;line-height:15.5px;color:#444;letter-spacing:0.08px;">Model...</span>
<span class="t" style="left:1724.5px;top:209.75px;font-size:11.5px;line-height:15.5px;color:#3a5a9a;letter-spacing:0.23px;">Build</span>
<div style="left:1761px;top:211px;width:2px;height:2px;background:#aaa;"></div>
<div style="left:1761px;top:215px;width:2px;height:2px;background:#aaa;"></div>
<div style="left:1761px;top:219px;width:2px;height:2px;background:#aaa;"></div>
<div style="left:1761px;top:223px;width:2px;height:2px;background:#aaa;"></div>
<div style="left:1765px;top:209px;width:135px;height:16px;background:#c9c9c9;border:1px solid #c0c0c0;"></div>
<div style="left:1765px;top:209px;width:17px;height:16px;background:#fff;border:1px solid #c0c0c0;"></div>
<svg style="left:1770px;top:213px;" width="6" height="9" viewBox="0 0 6 9"><path d="M5,0v8l-5,-4.0z" fill="#444"/></svg>
<div style="left:1782px;top:210px;width:10px;height:14px;background:#fff;"></div>
<div style="left:1883px;top:209px;width:17px;height:16px;background:#fff;border:1px solid #c0c0c0;"></div>
<svg style="left:1889px;top:213px;" width="6" height="9" viewBox="0 0 6 9"><path d="M0,0v8l5,-4.0z" fill="#444"/></svg>
<div style="left:1579px;top:235px;width:337px;height:1px;background:#a8a8a8;"></div>
<svg style="left:1730px;top:228px;" width="14" height="9" viewBox="0 0 14 9"><path d="M0,7.5L7,.8L14,7.5v1.5H0z" fill="#f0f0f0"/><path d="M0,7.5L7,.8L14,7.5" fill="none" stroke="#a8a8a8"/></svg>
<div style="left:1579px;top:241px;width:337px;height:564px;background:#fefefe;"></div>
<div style="left:1579px;top:241px;width:337px;height:564px;overflow:hidden;">
<span class="t" style="left:6px;top:3.75px;font-size:11.5px;line-height:15.5px;color:#444;letter-spacing:0.12px;">Loading Model Files...</span>
<span class="t" style="left:6px;top:22.75px;font-size:11.5px;line-height:15.5px;color:#444;letter-spacing:-0.11px;">true</span>
<span class="t" style="left:6px;top:60.75px;font-size:11.5px;line-height:15.5px;color:#444;letter-spacing:0.28px;">Loading Modelica Model...</span>
<span class="t" style="left:6px;top:79.75px;font-size:11.5px;line-height:15.5px;color:#444;letter-spacing:-0.11px;">true</span>
<span class="t" style="left:6px;top:98.75px;font-size:11.5px;line-height:15.5px;color:#444;letter-spacing:0.23px;">Running simulation...</span>
<span class="t" style="left:6px;top:117.75px;font-size:11.5px;line-height:15.5px;color:#444;letter-spacing:0.18px;">record SimulationResult</span>
<span class="t" style="left:18px;top:136.75px;font-size:11.5px;line-height:15.5px;color:#444;letter-spacing:0.13px;">resultFile = &quot;C:/Users/user/AppData/Roaming/Sparx Systems/EA/MDGModelica/Simulation/EAID_83EE6216&quot;,</span>
<span class="t" style="left:18px;top:155.75px;font-size:11.5px;line-height:15.5px;color:#444;letter-spacing:0.27px;">simulationOptions = &quot;startTime = 0.0, stopTime = 20.0, numberOfIntervals = 500, tolerance = 1e-06&quot;,</span>
<span class="t" style="left:18px;top:174.75px;font-size:11.5px;line-height:15.5px;color:#444;letter-spacing:-0.05px;">messages = &quot;LOG_SUCCESS       | info    | The initialization finished successfully without homotopy method.</span>
<span class="t" style="left:6px;top:193.75px;font-size:11.5px;line-height:15.5px;color:#444;letter-spacing:-0.08px;">LOG_SUCCESS       | info    | The simulation finished successfully.</span>
<span class="t" style="left:6px;top:212.75px;font-size:11.5px;line-height:15.5px;color:#444;letter-spacing:-0.35px;">,</span>
<span class="t" style="left:18px;top:231.75px;font-size:11.5px;line-height:15.5px;color:#444;letter-spacing:-0.09px;">timeFrontend = 0.2395774971020093,</span>
<span class="t" style="left:18px;top:250.75px;font-size:11.5px;line-height:15.5px;color:#444;letter-spacing:-0.15px;">timeBackend = 0.004842663253477589,</span>
<span class="t" style="left:18px;top:269.75px;font-size:11.5px;line-height:15.5px;color:#444;letter-spacing:-0.13px;">timeSimCode = 0.001013994880216383,</span>
<span class="t" style="left:18px;top:288.75px;font-size:11.5px;line-height:15.5px;color:#444;letter-spacing:-0.06px;">timeTemplates = 0.02149735558346213,</span>
<span class="t" style="left:18px;top:307.75px;font-size:11.5px;line-height:15.5px;color:#444;letter-spacing:-0.04px;">timeCompile = 4.870834440204791,</span>
<span class="t" style="left:18px;top:326.75px;font-size:11.5px;line-height:15.5px;color:#444;letter-spacing:-0.03px;">timeSimulation = 0.1224542962712519,</span>
<span class="t" style="left:18px;top:345.75px;font-size:11.5px;line-height:15.5px;color:#444;letter-spacing:-0.02px;">timeTotal = 5.260630494107419</span>
<span class="t" style="left:6px;top:364.75px;font-size:11.5px;line-height:15.5px;color:#444;letter-spacing:0.13px;">end SimulationResult;</span>
<span class="t" style="left:6px;top:402.75px;font-size:11.5px;line-height:15.5px;color:#444;letter-spacing:0.40px;">Plotting suimulation output...</span>
<span class="t" style="left:6px;top:421.75px;font-size:11.5px;line-height:15.5px;color:#444;letter-spacing:-0.11px;">true</span>
<span class="t" style="left:6px;top:440.75px;font-size:11.5px;line-height:15.5px;color:#444;letter-spacing:0.29px;">Closing Modelica</span>
<span class="t" style="left:6px;top:478.75px;font-size:11.5px;line-height:15.5px;color:#444;letter-spacing:0.16px;">Finished Modelica Script</span>
<span class="t" style="left:6px;top:497.75px;font-size:11.5px;line-height:15.5px;color:#444;letter-spacing:0.25px;">MDGModelica Simulation Build completed with exit code 0</span>
</div>
<div style="left:1579px;top:805px;width:337px;height:1px;background:#c8c8c8;"></div>
<div style="left:1579px;top:806px;width:337px;height:22px;background:#e6e6e6;"></div>
<span class="t" style="left:1585.5px;top:806.75px;font-size:11.5px;line-height:15.5px;color:#444;letter-spacing:-0.16px;">Properties</span>
<div style="left:1581px;top:823px;width:60px;height:3px;background:#c5d3f2;"></div>
<span class="t" style="left:1650.5px;top:806.75px;font-size:11.5px;line-height:15.5px;color:#444;letter-spacing:0.07px;">Collaborate</span>
<div style="left:1646px;top:823px;width:68px;height:3px;background:#ffd78a;"></div>
<span class="t" style="left:1723.5px;top:806.75px;font-size:11.5px;line-height:15.5px;color:#444;letter-spacing:0.01px;">Responsibilities</span>
<div style="left:1719px;top:823px;width:89px;height:3px;background:#f2f27c;"></div>
<div style="left:1812px;top:805px;width:87px;height:22px;background:#fff;"></div>
<div style="left:1898px;top:806px;width:1px;height:21px;background:#9a9a9a;"></div>
<div style="left:1812px;top:806px;width:1px;height:21px;background:#d0d0d0;"></div>
<span class="t" style="left:1817.5px;top:806.75px;font-size:11.5px;line-height:15.5px;color:#444;letter-spacing:-0.05px;">System Output</span>
<div style="left:1812px;top:823px;width:87px;height:3px;background:#5fbccb;"></div>
<div style="left:1579px;top:828px;width:337px;height:6px;background:#c9c9c9;"></div>
<div style="left:1579px;top:834px;width:337px;height:34px;background:#e6e6e6;"></div>
<span class="t" style="left:1583.5px;top:841.75px;font-size:17.5px;line-height:21.5px;color:#444;letter-spacing:0.70px;">Notes</span>
<svg style="left:1864px;top:851px;" width="10" height="5.5" viewBox="0 0 10 5.5"><path d="M0,0h9l-4.5,4.5z" fill="#555"/></svg>
<svg style="left:1884px;top:847px;" width="8" height="11" viewBox="0 0 8 11"><path d="M2,.5h4v5h-4z M.5,5.5h7 M4,5.5v5" fill="none" stroke="#555" stroke-width="1.1"/><path d="M5,1v4.5" stroke="#555" stroke-width="1.4"/></svg>
<svg style="left:1901px;top:848px;" width="10" height="10" viewBox="0 0 10 10"><path d="M.7,.7l7.6,7.6M8.3,.7l-7.6,7.6" stroke="#555" stroke-width="1.3"/></svg>
<div style="left:1579px;top:868px;width:337px;height:25px;background:#f0f0f0;"></div>
<span class="t" style="left:1587px;top:871.5px;font-size:15px;line-height:19px;color:#555;font-weight:bold;font-family:'Liberation Serif',serif;">B</span>
<span class="t" style="left:1610px;top:871.5px;font-size:15px;line-height:19px;color:#555;font-family:'Liberation Serif',serif;font-style:italic;">I</span>
<span class="t" style="left:1630px;top:871.5px;font-size:15px;line-height:19px;color:#4a4a7a;font-family:'Liberation Serif',serif;text-decoration:underline;">U</span>
<svg style="left:1652px;top:873px;" width="16" height="17" viewBox="0 0 16 17"><text x="0" y="10" font-size="11" font-family="Liberation Sans" fill="#444">A</text><rect x="7" y="1" width="4" height="4" fill="#e84a3a"/><rect x="11" y="1" width="4" height="4" fill="#f2a23a"/><rect x="9" y="5" width="5" height="4" fill="#3aa0e8"/><rect x="0" y="12" width="15" height="3.5" fill="#000"/></svg>
<svg style="left:1674px;top:880px;" width="6" height="4" viewBox="0 0 6 4"><path d="M0,0h5l-2.5,3z" fill="#555"/></svg>
<div style="left:1686px;top:870px;width:1px;height:21px;background:#d0d0d0;"></div>
<svg style="left:1695px;top:874px;" width="14" height="14" viewBox="0 0 14 14"><path d="M0,1.5h2.5M0,6.5h2.5M0,11.5h2.5" stroke="#3a3a7a" stroke-width="2"/><path d="M4.5,1.5h9M4.5,6.5h9M4.5,11.5h9" stroke="#555" stroke-width="1.2"/></svg>
<svg style="left:1716px;top:873px;" width="15" height="16" viewBox="0 0 15 16"><path d="M5.5,2.5h9M5.5,7.5h9M5.5,12.5h9" stroke="#555" stroke-width="1.2"/><text x="0" y="5" font-size="6" font-family="Liberation Sans" fill="#3a3a7a">1</text><text x="0" y="10.5" font-size="6" font-family="Liberation Sans" fill="#3a3a7a">2</text><text x="0" y="16" font-size="6" font-family="Liberation Sans" fill="#3a3a7a">3</text></svg>
<div style="left:1738px;top:870px;width:1px;height:21px;background:#d0d0d0;"></div>
<svg style="left:1747px;top:873px;" width="16" height="16" viewBox="0 0 16 16"><path d="M1.5,7l6,6M7.5,7l-6,6" stroke="#444" stroke-width="1.5"/><text x="9" y="7" font-size="7" font-family="Liberation Sans" fill="#a02020">2</text></svg>
<svg style="left:1769px;top:873px;" width="16" height="16" viewBox="0 0 16 16"><path d="M1.5,2l6,6M7.5,2l-6,6" stroke="#444" stroke-width="1.5"/><text x="9" y="15" font-size="7" font-family="Liberation Sans" fill="#2040c0">2</text></svg>
<svg style="left:1789px;top:872px;" width="18" height="18" viewBox="0 0 18 18"><circle cx="7" cy="7" r="6.5" fill="#1c2a5c"/><path d="M3,4q3,-3 6,0q-1,4 -4,5q-3,-2 -2,-5z" fill="#2f9a4a"/><rect x="4" y="10.5" width="12" height="5.5" rx="2.7" fill="none" stroke="#e0a020" stroke-width="1.8"/><path d="M8,13.2h4" stroke="#7a5a10" stroke-width="1.4"/></svg>
<div style="left:1812px;top:870px;width:1px;height:21px;background:#d0d0d0;"></div>
<svg style="left:1819px;top:873px;" width="15" height="17" viewBox="0 0 15 17"><path d="M.5,.5h9l4,4v11.5h-13z" fill="#fff" stroke="#3050c0"/><path d="M9.5,.5v4h4" fill="none" stroke="#3050c0"/><path d="M3,5.5h5M3,8h8M3,10.5h6M3,13h4" stroke="#e08080" stroke-width="1"/><path d="M7.5,14l5,-4.5v4.5z" fill="#d02020"/></svg>
<div style="left:1579px;top:893px;width:337px;height:138px;background:#fff;"></div>
<div style="left:1579px;top:1031px;width:337px;height:1px;background:#c8c8c8;"></div>
<div style="left:1579px;top:1032px;width:337px;height:22px;background:#e6e6e6;"></div>
<div style="left:1579px;top:1031px;width:41px;height:22px;background:#fff;"></div>
<div style="left:1620px;top:1032px;width:1px;height:21px;background:#d0d0d0;"></div>
<span class="t" style="left:1585.5px;top:1032.75px;font-size:11.5px;line-height:15.5px;color:#444;letter-spacing:-0.26px;">Notes</span>
<div style="left:1579px;top:1050px;width:41px;height:3px;background:#c5d3f2;"></div>
<span class="t" style="left:1628.5px;top:1032.75px;font-size:11.5px;line-height:15.5px;color:#444;letter-spacing:0.03px;">Scripting</span>
<div style="left:1624px;top:1050px;width:54px;height:3px;background:#ffd78a;"></div>
<span class="t" style="left:1521.5px;top:1058.75px;font-size:11.5px;line-height:15.5px;color:#444;letter-spacing:-1.16px;">SysML</span>
<div style="left:1578px;top:1059px;width:1px;height:16px;background:#d0d0d0;"></div>
<div style="left:1600px;top:1065px;width:8px;height:2px;background:#999;"></div>
<div style="left:1616px;top:1059px;width:4px;height:13px;background:#bdbdbd;"></div>
<div style="left:1622px;top:1066px;width:83px;height:1px;background:#9a9a9a;"></div>
<div style="left:1716px;top:1065px;width:9px;height:2px;background:#999;"></div>
<div style="left:1719.5px;top:1061.5px;width:2px;height:9px;background:#999;"></div>
<span class="t" style="left:1738.5px;top:1059.25px;font-size:10.5px;line-height:14.5px;color:#b4b4b4;letter-spacing:-1.05px;">CAP</span>
<span class="t" style="left:1777.5px;top:1059.25px;font-size:10.5px;line-height:14.5px;color:#444;letter-spacing:0.54px;">NUM</span>
<span class="t" style="left:1823.5px;top:1059.25px;font-size:10.5px;line-height:14.5px;color:#b4b4b4;letter-spacing:-1.17px;">SCRL</span>
<span class="t" style="left:1868.5px;top:1059.25px;font-size:10.5px;line-height:14.5px;color:#b4b4b4;letter-spacing:-0.32px;">CLOUD</span>
<div style="left:1513px;top:170px;width:59px;height:27px;background:#e6e6e6;"></div>
<div style="left:1513px;top:170px;width:59px;height:1px;background:#d6d6d6;"></div>
<div style="left:1513px;top:197px;width:59px;height:1px;background:#d0d0d0;"></div>
<svg style="left:1535px;top:182px;" width="8" height="5" viewBox="0 0 8 5"><path d="M0,0h7l-3.5,4z" fill="#000"/></svg>
<svg style="left:1555px;top:180px;" width="8" height="8" viewBox="0 0 8 8"><path d="M.7,.7l5.6,5.6M6.3,.7l-5.6,5.6" stroke="#000" stroke-width="1.7"/></svg>
<div style="left:1513px;top:198px;width:59px;height:21px;background:#e6e6e6;"></div>
<div style="left:1513px;top:219px;width:59px;height:1px;background:#d0d0d0;"></div>
<svg style="left:1541px;top:203px;" width="7" height="11" viewBox="0 0 7 11"><path d="M5.5,.8v9l-4.5,-4.5z" fill="#f0f0f0" stroke="#777" stroke-width=".9"/></svg>
<svg style="left:1559px;top:203px;" width="7" height="11" viewBox="0 0 7 11"><path d="M1,.8v9l4.5,-4.5z" fill="#f0f0f0" stroke="#777" stroke-width=".9"/></svg>
<div style="left:1572px;top:170px;width:1px;height:884px;background:#d4d4d4;"></div>
<div style="left:1513px;top:251px;width:54px;height:20px;background:#e6e6e6;"></div>
<div style="left:823px;top:271px;width:744px;height:773px;background:#f0f0f0;border:1px solid #b4b4b4;"></div>
<div style="left:1513px;top:360px;width:36px;height:24px;background:#e6e6e6;"></div>
<div style="left:1094px;top:384px;width:455px;height:647px;background:#fff;border:1px solid #c2c2c2;"></div>
<div style="left:1513px;top:384px;width:35px;height:1px;background:#c8c8c8;"></div>
<div style="left:1094px;top:384px;width:455px;height:647px;background:#fff;border:1px solid #c2c2c2;"></div>
<div style="left:836px;top:384px;width:249px;height:647px;background:#fff;border:1px solid #c2c2c2;"></div>
<div style="left:278px;top:1053px;width:1294px;height:1px;background:#d6d6d6;"></div>
<div style="left:816px;top:1021px;width:1px;height:33px;background:#d6d6d6;"></div>
<div style="left:278px;top:1021px;width:1px;height:33px;background:#d6d6d6;"></div>
<div style="left:282px;top:1000px;width:527px;height:47px;background:#fdfdfd;border:1px solid #c2c2c2;"></div>
<div style="left:793px;top:1021px;width:16px;height:9px;background:#cdcdcd;"></div>
<div style="left:793px;top:1030px;width:16px;height:17px;background:#fff;border:1px solid #c2c2c2;"></div>
<svg style="left:797px;top:1036px;" width="9" height="5.5" viewBox="0 0 9 5.5"><path d="M0,0h8l-4.0,4.5z" fill="#555"/></svg>
<div style="left:283px;top:1021px;width:509px;height:25px;overflow:hidden;">
<svg style="left:25px;top:0px;" width="8" height="12" viewBox="0 0 8 12"><path d="M.8,.8v9.5l6,-4.75z" fill="#fff" stroke="#666" stroke-width=".9"/></svg>
<span class="t" style="left:42px;top:-2.25px;font-size:11.5px;line-height:15.5px;color:#444;letter-spacing:0.23px;">Ground</span>
<svg style="left:25px;top:21px;" width="8" height="12" viewBox="0 0 8 12"><path d="M.8,.8v9.5l6,-4.75z" fill="#fff" stroke="#666" stroke-width=".9"/></svg>
<span class="t" style="left:42px;top:19.25px;font-size:11.5px;line-height:15.5px;color:#444;letter-spacing:0.50px;">OpAmp</span>
</div>
<div style="left:83px;top:51px;width:1430px;height:970px;background:#5cbb8a;border:1px solid #3f9b6c;"></div>
<div style="left:91px;top:82px;width:1414px;height:931px;background:#f0f0f0;"></div>
<svg style="left:93px;top:59px;" width="17" height="17" viewBox="0 0 16 16"><g fill="none" stroke="#1a3fb0" stroke-width="1.6"><circle cx="3.5" cy="11.5" r="2.3"/><circle cx="11" cy="2.8" r="1.7" stroke="#3a5fc8" stroke-width="1.2"/></g>
    <path d="M5.5,10.5L8,8M10.3,4.5L9.3,7M11.3,4.5L13.5,12" stroke="#1a2f90" stroke-width="1.5" fill="none"/>
    <circle cx="9.3" cy="9.3" r="2.6" fill="#c9d4ee" stroke="#8090c0" stroke-width="1"/><circle cx="13.6" cy="12.8" r="1.5" fill="#1a3fb0"/><path d="M6,12.5l6,.8" stroke="#1a2f90" stroke-width="1.3"/></svg>
<span class="t" style="left:655px;top:56.75px;font-size:14.5px;line-height:18.5px;color:#1c1c1c;letter-spacing:0.29px;">OMEdit - OpenModelica Connection Editor</span>
<div style="left:1417px;top:63px;width:8px;height:3px;background:#111;"></div>
<div style="left:1443px;top:58px;width:11px;height:9px;border:1px solid #111;border-top-width:3px;"></div>
<div style="left:1461px;top:52px;width:45px;height:20px;background:#c75050;"></div>
<svg style="left:1479px;top:57px;" width="10" height="10" viewBox="0 0 10 10"><path d="M1,1l8,8M9,1l-8,8" stroke="#fff" stroke-width="1.9"/></svg>
<div style="left:91px;top:82px;width:1414px;height:22px;background:#f5f6f7;"></div>
<span class="t" style="left:100px;top:85.75px;font-size:11.5px;line-height:15.5px;color:#000;letter-spacing:-0.18px;">File</span>
<span class="t" style="left:134px;top:85.75px;font-size:11.5px;line-height:15.5px;color:#000;letter-spacing:0.06px;">Edit</span>
<span class="t" style="left:170px;top:85.75px;font-size:11.5px;line-height:15.5px;color:#000;letter-spacing:0.09px;">View</span>
<span class="t" style="left:211px;top:85.75px;font-size:11.5px;line-height:15.5px;color:#000;letter-spacing:0.31px;">Simulation</span>
<span class="t" style="left:284px;top:85.75px;font-size:11.5px;line-height:15.5px;color:#000;letter-spacing:0.15px;">Debug</span>
<span class="t" style="left:335.5px;top:85.75px;font-size:11.5px;line-height:15.5px;color:#000;letter-spacing:0.34px;">OMSimulator</span>
<span class="t" style="left:422.5px;top:85.75px;font-size:11.5px;line-height:15.5px;color:#8a8a8a;letter-spacing:-0.10px;">Git</span>
<span class="t" style="left:453.5px;top:85.75px;font-size:11.5px;line-height:15.5px;color:#000;letter-spacing:0.41px;">Tools</span>
<span class="t" style="left:498px;top:85.75px;font-size:11.5px;line-height:15.5px;color:#000;letter-spacing:0.28px;">Help</span>
<div style="left:91px;top:104px;width:1414px;height:33px;background:#f0f0f0;"></div>
<div style="left:91px;top:136px;width:1413px;height:1px;background:#cfcfcf;"></div>
<div style="left:91px;top:137px;width:1413px;height:1px;background:#fafafa;"></div>
<div style="left:227px;top:105px;width:1px;height:32px;background:#cfcfcf;"></div>
<div style="left:228px;top:105px;width:1px;height:32px;background:#fbfbfb;"></div>
<div style="left:301px;top:105px;width:1px;height:32px;background:#cfcfcf;"></div>
<div style="left:302px;top:105px;width:1px;height:32px;background:#fbfbfb;"></div>
<div style="left:443px;top:105px;width:1px;height:32px;background:#cfcfcf;"></div>
<div style="left:444px;top:105px;width:1px;height:32px;background:#fbfbfb;"></div>
<div style="left:716px;top:105px;width:1px;height:32px;background:#cfcfcf;"></div>
<div style="left:717px;top:105px;width:1px;height:32px;background:#fbfbfb;"></div>
<div style="left:883px;top:105px;width:1px;height:32px;background:#cfcfcf;"></div>
<div style="left:884px;top:105px;width:1px;height:32px;background:#fbfbfb;"></div>
<div style="left:937px;top:105px;width:1px;height:32px;background:#cfcfcf;"></div>
<div style="left:938px;top:105px;width:1px;height:32px;background:#fbfbfb;"></div>
<div style="left:1042px;top:105px;width:1px;height:32px;background:#cfcfcf;"></div>
<div style="left:1043px;top:105px;width:1px;height:32px;background:#fbfbfb;"></div>
<div style="left:1503px;top:105px;width:1px;height:32px;background:#cfcfcf;"></div>
<div style="left:1504px;top:105px;width:1px;height:32px;background:#fbfbfb;"></div>
<svg style="left:96px;top:108px;" width="3" height="27" viewBox="0 0 3 27"><rect x="0" y="0.0" width="1.700" height="1.700" fill="#ababab"/><rect x="1" y="2.2" width="1.700" height="1.700" fill="#ababab"/><rect x="0" y="4.4" width="1.700" height="1.700" fill="#ababab"/><rect x="1" y="6.6" width="1.700" height="1.700" fill="#ababab"/><rect x="0" y="8.8" width="1.700" height="1.700" fill="#ababab"/><rect x="1" y="11.0" width="1.700" height="1.700" fill="#ababab"/><rect x="0" y="13.2" width="1.700" height="1.700" fill="#ababab"/><rect x="1" y="15.4" width="1.700" height="1.700" fill="#ababab"/><rect x="0" y="17.6" width="1.700" height="1.700" fill="#ababab"/><rect x="1" y="19.8" width="1.700" height="1.700" fill="#ababab"/><rect x="0" y="22.0" width="1.700" height="1.700" fill="#ababab"/><rect x="1" y="24.2" width="1.700" height="1.700" fill="#ababab"/></svg>
<svg style="left:232px;top:108px;" width="3" height="27" viewBox="0 0 3 27"><rect x="0" y="0.0" width="1.700" height="1.700" fill="#ababab"/><rect x="1" y="2.2" width="1.700" height="1.700" fill="#ababab"/><rect x="0" y="4.4" width="1.700" height="1.700" fill="#ababab"/><rect x="1" y="6.6" width="1.700" height="1.700" fill="#ababab"/><rect x="0" y="8.8" width="1.700" height="1.700" fill="#ababab"/><rect x="1" y="11.0" width="1.700" height="1.700" fill="#ababab"/><rect x="0" y="13.2" width="1.700" height="1.700" fill="#ababab"/><rect x="1" y="15.4" width="1.700" height="1.700" fill="#ababab"/><rect x="0" y="17.6" width="1.700" height="1.700" fill="#ababab"/><rect x="1" y="19.8" width="1.700" height="1.700" fill="#ababab"/><rect x="0" y="22.0" width="1.700" height="1.700" fill="#ababab"/><rect x="1" y="24.2" width="1.700" height="1.700" fill="#ababab"/></svg>
<svg style="left:306px;top:108px;" width="3" height="27" viewBox="0 0 3 27"><rect x="0" y="0.0" width="1.700" height="1.700" fill="#ababab"/><rect x="1" y="2.2" width="1.700" height="1.700" fill="#ababab"/><rect x="0" y="4.4" width="1.700" height="1.700" fill="#ababab"/><rect x="1" y="6.6" width="1.700" height="1.700" fill="#ababab"/><rect x="0" y="8.8" width="1.700" height="1.700" fill="#ababab"/><rect x="1" y="11.0" width="1.700" height="1.700" fill="#ababab"/><rect x="0" y="13.2" width="1.700" height="1.700" fill="#ababab"/><rect x="1" y="15.4" width="1.700" height="1.700" fill="#ababab"/><rect x="0" y="17.6" width="1.700" height="1.700" fill="#ababab"/><rect x="1" y="19.8" width="1.700" height="1.700" fill="#ababab"/><rect x="0" y="22.0" width="1.700" height="1.700" fill="#ababab"/><rect x="1" y="24.2" width="1.700" height="1.700" fill="#ababab"/></svg>
<svg style="left:448px;top:108px;" width="3" height="27" viewBox="0 0 3 27"><rect x="0" y="0.0" width="1.700" height="1.700" fill="#ababab"/><rect x="1" y="2.2" width="1.700" height="1.700" fill="#ababab"/><rect x="0" y="4.4" width="1.700" height="1.700" fill="#ababab"/><rect x="1" y="6.6" width="1.700" height="1.700" fill="#ababab"/><rect x="0" y="8.8" width="1.700" height="1.700" fill="#ababab"/><rect x="1" y="11.0" width="1.700" height="1.700" fill="#ababab"/><rect x="0" y="13.2" width="1.700" height="1.700" fill="#ababab"/><rect x="1" y="15.4" width="1.700" height="1.700" fill="#ababab"/><rect x="0" y="17.6" width="1.700" height="1.700" fill="#ababab"/><rect x="1" y="19.8" width="1.700" height="1.700" fill="#ababab"/><rect x="0" y="22.0" width="1.700" height="1.700" fill="#ababab"/><rect x="1" y="24.2" width="1.700" height="1.700" fill="#ababab"/></svg>
<svg style="left:721px;top:108px;" width="3" height="27" viewBox="0 0 3 27"><rect x="0" y="0.0" width="1.700" height="1.700" fill="#ababab"/><rect x="1" y="2.2" width="1.700" height="1.700" fill="#ababab"/><rect x="0" y="4.4" width="1.700" height="1.700" fill="#ababab"/><rect x="1" y="6.6" width="1.700" height="1.700" fill="#ababab"/><rect x="0" y="8.8" width="1.700" height="1.700" fill="#ababab"/><rect x="1" y="11.0" width="1.700" height="1.700" fill="#ababab"/><rect x="0" y="13.2" width="1.700" height="1.700" fill="#ababab"/><rect x="1" y="15.4" width="1.700" height="1.700" fill="#ababab"/><rect x="0" y="17.6" width="1.700" height="1.700" fill="#ababab"/><rect x="1" y="19.8" width="1.700" height="1.700" fill="#ababab"/><rect x="0" y="22.0" width="1.700" height="1.700" fill="#ababab"/><rect x="1" y="24.2" width="1.700" height="1.700" fill="#ababab"/></svg>
<svg style="left:888px;top:108px;" width="3" height="27" viewBox="0 0 3 27"><rect x="0" y="0.0" width="1.700" height="1.700" fill="#ababab"/><rect x="1" y="2.2" width="1.700" height="1.700" fill="#ababab"/><rect x="0" y="4.4" width="1.700" height="1.700" fill="#ababab"/><rect x="1" y="6.6" width="1.700" height="1.700" fill="#ababab"/><rect x="0" y="8.8" width="1.700" height="1.700" fill="#ababab"/><rect x="1" y="11.0" width="1.700" height="1.700" fill="#ababab"/><rect x="0" y="13.2" width="1.700" height="1.700" fill="#ababab"/><rect x="1" y="15.4" width="1.700" height="1.700" fill="#ababab"/><rect x="0" y="17.6" width="1.700" height="1.700" fill="#ababab"/><rect x="1" y="19.8" width="1.700" height="1.700" fill="#ababab"/><rect x="0" y="22.0" width="1.700" height="1.700" fill="#ababab"/><rect x="1" y="24.2" width="1.700" height="1.700" fill="#ababab"/></svg>
<svg style="left:943px;top:108px;" width="3" height="27" viewBox="0 0 3 27"><rect x="0" y="0.0" width="1.700" height="1.700" fill="#ababab"/><rect x="1" y="2.2" width="1.700" height="1.700" fill="#ababab"/><rect x="0" y="4.4" width="1.700" height="1.700" fill="#ababab"/><rect x="1" y="6.6" width="1.700" height="1.700" fill="#ababab"/><rect x="0" y="8.8" width="1.700" height="1.700" fill="#ababab"/><rect x="1" y="11.0" width="1.700" height="1.700" fill="#ababab"/><rect x="0" y="13.2" width="1.700" height="1.700" fill="#ababab"/><rect x="1" y="15.4" width="1.700" height="1.700" fill="#ababab"/><rect x="0" y="17.6" width="1.700" height="1.700" fill="#ababab"/><rect x="1" y="19.8" width="1.700" height="1.700" fill="#ababab"/><rect x="0" y="22.0" width="1.700" height="1.700" fill="#ababab"/><rect x="1" y="24.2" width="1.700" height="1.700" fill="#ababab"/></svg>
<svg style="left:1048px;top:108px;" width="3" height="27" viewBox="0 0 3 27"><rect x="0" y="0.0" width="1.700" height="1.700" fill="#ababab"/><rect x="1" y="2.2" width="1.700" height="1.700" fill="#ababab"/><rect x="0" y="4.4" width="1.700" height="1.700" fill="#ababab"/><rect x="1" y="6.6" width="1.700" height="1.700" fill="#ababab"/><rect x="0" y="8.8" width="1.700" height="1.700" fill="#ababab"/><rect x="1" y="11.0" width="1.700" height="1.700" fill="#ababab"/><rect x="0" y="13.2" width="1.700" height="1.700" fill="#ababab"/><rect x="1" y="15.4" width="1.700" height="1.700" fill="#ababab"/><rect x="0" y="17.6" width="1.700" height="1.700" fill="#ababab"/><rect x="1" y="19.8" width="1.700" height="1.700" fill="#ababab"/><rect x="0" y="22.0" width="1.700" height="1.700" fill="#ababab"/><rect x="1" y="24.2" width="1.700" height="1.700" fill="#ababab"/></svg>
<svg style="left:104px;top:107px;" width="27" height="27" viewBox="0 0 27 27"><path d="M1.8,3.300h16.200v14.200l-7.500,8h-6.500q-2.200,0 -2.200,-2.200z" fill="#fff" stroke="#8e8e8e" stroke-width="1"/><path d="M18,17.500h-5.500q-1.800,0 -1.800,1.800v6z" fill="#f2f2f2" stroke="#777" stroke-width="1"/><path d="M18.100,2.200v11.800M11.400,8.100h13.500" stroke="#78aa22" stroke-width="4.400"/></svg>
<svg style="left:135px;top:109px;" width="27" height="24" viewBox="0 0 27 24"><defs><linearGradient id="fo" x1="0" y1="0" x2="0" y2="1"><stop offset="0" stop-color="#9cc0ec"/><stop offset="1" stop-color="#4f86cc"/></linearGradient></defs><path d="M2,3h8l2,2h10v16H2z" fill="#d8d8d8" stroke="#9a9a9a"/><path d="M4,6h18v3H4z" fill="#f4f4f4" stroke="#bbb" stroke-width=".6"/><path d="M6.5,10.5h19l-3.5,11.5H2.5z" fill="url(#fo)" stroke="#3f73b8" stroke-width=".8"/></svg>
<svg style="left:168px;top:109px;" width="23" height="24" viewBox="0 0 25 25.500"><path d="M1,3q0,-2 2,-2h17l4,4v17q0,2 -2,2H3q-2,0 -2,-2z" fill="#1e90f0" stroke="#3a78b8" stroke-width=".8"/><rect x="5" y="1" width="14" height="8.5" fill="#f4f4f4"/><rect x="14" y="2" width="3.5" height="6" fill="#333"/><rect x="4.5" y="13" width="16" height="11" fill="#eee"/><path d="M6,15.5h13M6,18h13M6,20.5h13M6,23h13" stroke="#7a7a7a" stroke-width="1.1"/></svg>
<svg style="left:199px;top:109px;" width="23" height="24" viewBox="0 0 25 25.500"><path d="M1,3q0,-2 2,-2h17l4,4v17q0,2 -2,2H3q-2,0 -2,-2z" fill="#1e90f0" stroke="#3a78b8" stroke-width=".8"/><rect x="5" y="1" width="14" height="8.5" fill="#f4f4f4"/><rect x="14" y="2" width="3.5" height="6" fill="#333"/><rect x="4.5" y="13" width="16" height="11" fill="#eee"/><path d="M6,15.5h13M6,18h13M6,20.5h13M6,23h13" stroke="#7a7a7a" stroke-width="1.1"/><g transform="translate(5,25) rotate(-48)"><rect x="3" y="-3" width="17" height="6" fill="#f0c020" stroke="#8a6a10" stroke-width=".7"/><path d="M3,-3l-5,3l5,3z" fill="#e8d0a0" stroke="#6a5a30" stroke-width=".6"/><path d="M-2,0l2,-1.2v2.4z" fill="#222"/><rect x="20" y="-3" width="3.5" height="6" fill="#444"/><path d="M5,-1h14" stroke="#c89a10" stroke-width="1"/></g></svg>
<svg style="left:242px;top:109px;" width="22" height="24" viewBox="0 0 22 24"><path d="M10.5,2L2.5,8l8,6.5v-4q5.5,-.5 6,3.5q.3,3.5 -4.5,5.5q8.5,-.5 8.5,-7.5q-.5,-6.5 -10,-6.5z" fill="#dcdcdc" stroke="#d0d0d0" stroke-width=".6"/></svg>
<svg style="left:273px;top:109px;" width="22" height="24" viewBox="0 0 22 24"><path d="M11.5,2l8,6l-8,6.5v-4q-5.5,-.5 -6,3.5q-.3,3.5 4.5,5.5q-8.5,-.5 -8.5,-7.5q.5,-6.5 10,-6.5z" fill="#dcdcdc" stroke="#d0d0d0" stroke-width=".6"/></svg>
<div style="left:312px;top:106px;width:31px;height:30px;background:#cce4f7;border:1px solid #62a7e8;"></div>
<svg style="left:316px;top:111px;" width="23" height="22" viewBox="0 0 23 22"><rect x="1.2" y="1.2" width="20.6" height="19.6" rx="2" fill="#e4eef8" stroke="#34404c" stroke-width="2.4"/><path d="M8,1v20M15,1v20M1,7.8h21M1,14.3h21" stroke="#34404c" stroke-width="2.2"/></svg>
<div style="left:345px;top:110px;width:1px;height:23px;background:#d4d4d4;"></div>
<svg style="left:352px;top:109px;" width="26" height="26" viewBox="0 0 26 26"><path d="M15.5,15l6.5,6.5" stroke="#4a4a4a" stroke-width="3.2" stroke-linecap="round"/><circle cx="9.5" cy="9" r="7.6" fill="#3d9ff5" stroke="#2a2a2a" stroke-width="1.5"/></svg>
<svg style="left:383px;top:109px;" width="26" height="26" viewBox="0 0 26 26"><path d="M15.5,15l6.5,6.5" stroke="#4a4a4a" stroke-width="3.2" stroke-linecap="round"/><circle cx="9.5" cy="9" r="7.6" fill="#3d9ff5" stroke="#2a2a2a" stroke-width="1.5"/><path d="M5.5,9h8" stroke="#1a3a70" stroke-width="1.6"/><path d="M9.5,5v8" stroke="#1a3a70" stroke-width="1.6"/></svg>
<svg style="left:414px;top:109px;" width="26" height="26" viewBox="0 0 26 26"><path d="M15.5,15l6.5,6.5" stroke="#4a4a4a" stroke-width="3.2" stroke-linecap="round"/><circle cx="9.5" cy="9" r="7.6" fill="#3d9ff5" stroke="#2a2a2a" stroke-width="1.5"/><path d="M5.5,9h8" stroke="#1a3a70" stroke-width="1.6"/></svg>
<svg style="left:457px;top:110px;" width="24" height="22" viewBox="0 0 24 22"><path d="M2,2L22,20" stroke="#2a55c0" stroke-width="2.6"/></svg>
<svg style="left:488px;top:109px;" width="24" height="24" viewBox="0 0 24 24"><defs><radialGradient id="bg1"><stop offset="0" stop-color="#3f6ad0"/><stop offset="1" stop-color="#2248b0"/></radialGradient></defs><path d="M1,5.5L15,1L23,11.5L14,23L2,19.5z" fill="url(#bg1)" stroke="#162f80" stroke-width=".8"/></svg>
<svg style="left:520px;top:110px;" width="22" height="22" viewBox="0 0 22 22"><rect x="0" y="0" width="22" height="22" fill="url(#bg1)" stroke="#1a3a98" stroke-width=".8"/></svg>
<svg style="left:550px;top:109px;" width="24" height="24" viewBox="0 0 24 24"><circle cx="12" cy="12" r="11.4" fill="url(#bg1)" stroke="#1a3a98" stroke-width=".6"/></svg>
<span class="t" style="left:580.5px;top:102.5px;font-size:31px;line-height:35px;color:#2a50b8;font-weight:bold;font-family:'Liberation Serif',serif;">T</span>
<svg style="left:613px;top:110px;" width="22" height="22" viewBox="0 0 22 22"><rect width="22" height="22" fill="#3f9a3a"/><path d="M0,0V22H14z" fill="#2248b8"/><path d="M8,0H22V14z" fill="#e01010"/><rect x=".4" y=".4" width="21.2" height="21.2" fill="none" stroke="#333" stroke-width=".6"/></svg>
<div style="left:646px;top:106px;width:31px;height:30px;background:#cce4f7;border:1px solid #62a7e8;"></div>
<svg style="left:650px;top:110px;" width="24" height="23" viewBox="0 0 24 23"><path d="M5,11.5L19,3.5M5,11.5L19,19.5" stroke="#111" stroke-width="1.7"/><circle cx="4.5" cy="11.5" r="3.3" fill="#111"/><circle cx="19.5" cy="3.8" r="3.3" fill="#111"/><circle cx="19.5" cy="19.2" r="3.3" fill="#111"/></svg>
<div style="left:683px;top:106px;width:31px;height:30px;background:#cce4f7;border:1px solid #62a7e8;"></div>
<svg style="left:687px;top:110px;" width="24" height="23" viewBox="0 0 24 23"><rect x="1" y="1.5" width="21" height="7" rx="1.5" fill="#e8eef6" stroke="#6a6a6a" stroke-width="1.6"/><rect x="1" y="14.5" width="21" height="7" rx="1.5" fill="#e8eef6" stroke="#6a6a6a" stroke-width="1.6"/><path d="M11.5,8.5v6" stroke="#9a9a9a" stroke-width="2"/></svg>
<svg style="left:729px;top:110px;" width="24" height="22" viewBox="0 0 24 22"><defs><linearGradient id="ga729" gradientUnits="userSpaceOnUse" x1="0" y1="0" x2="0" y2="22"><stop offset="0" stop-color="#86b030"/><stop offset=".55" stop-color="#5f8f1c"/><stop offset="1" stop-color="#3d6410"/></linearGradient></defs><path d="M1,11H19M11.5,3L20,11L11.5,19" fill="none" stroke="url(#ga729)" stroke-width="5.2" stroke-linejoin="miter" stroke-linecap="butt"/></svg>
<svg style="left:761px;top:110px;" width="24" height="22" viewBox="0 0 24 22"><defs><linearGradient id="ga761" gradientUnits="userSpaceOnUse" x1="0" y1="0" x2="0" y2="22"><stop offset="0" stop-color="#86b030"/><stop offset=".55" stop-color="#5f8f1c"/><stop offset="1" stop-color="#3d6410"/></linearGradient></defs><path d="M9,11H19M11.5,3L20,11L11.5,19" fill="none" stroke="url(#ga761)" stroke-width="5.2" stroke-linejoin="miter" stroke-linecap="butt"/></svg>
<svg style="left:760px;top:113px;" width="14" height="14" viewBox="0 0 14 14"><ellipse cx="7" cy="7" rx="5.5" ry="5" fill="#4a80e0"/><circle cx="5" cy="5.5" r="1.1" fill="#113"/><circle cx="8.5" cy="5" r="1.1" fill="#113"/><circle cx="6" cy="9" r="1.1" fill="#113"/><circle cx="9.5" cy="8.5" r="1.1" fill="#113"/><path d="M2,11l-1.5,2M4,12.5l-.5,1.5" stroke="#222" stroke-width=".8"/></svg>
<svg style="left:792px;top:110px;" width="24" height="22" viewBox="0 0 24 22"><defs><linearGradient id="ga792" gradientUnits="userSpaceOnUse" x1="0" y1="0" x2="0" y2="22"><stop offset="0" stop-color="#86b030"/><stop offset=".55" stop-color="#5f8f1c"/><stop offset="1" stop-color="#3d6410"/></linearGradient></defs><path d="M9,11H19M11.5,3L20,11L11.5,19" fill="none" stroke="url(#ga792)" stroke-width="5.2" stroke-linejoin="miter" stroke-linecap="butt"/></svg>
<svg style="left:791px;top:113px;" width="14" height="14" viewBox="0 0 14 14"><ellipse cx="7" cy="7.5" rx="5.6" ry="5" fill="#e01818"/><circle cx="10" cy="3.5" r="2.4" fill="#111"/><circle cx="5" cy="6" r="1.1" fill="#111"/><circle cx="8" cy="8" r="1.1" fill="#111"/><circle cx="5" cy="10" r="1.1" fill="#111"/><circle cx="10" cy="10.5" r="1" fill="#111"/></svg>
<svg style="left:823px;top:110px;" width="24" height="22" viewBox="0 0 24 22"><defs><linearGradient id="ga823" gradientUnits="userSpaceOnUse" x1="0" y1="0" x2="0" y2="22"><stop offset="0" stop-color="#86b030"/><stop offset=".55" stop-color="#5f8f1c"/><stop offset="1" stop-color="#3d6410"/></linearGradient></defs><path d="M9,11H19M11.5,3L20,11L11.5,19" fill="none" stroke="url(#ga823)" stroke-width="5.2" stroke-linejoin="miter" stroke-linecap="butt"/></svg>
<svg style="left:821px;top:112px;" width="16" height="16" viewBox="0 0 16 16"><path d="M3,5l5,-3l5,3v6l-5,3l-5,-3z" fill="#f4f4f4" stroke="#222" stroke-width="1"/><path d="M3,5l5,3l5,-3M8,8v6" fill="none" stroke="#222" stroke-width="1"/><path d="M8,8l-6,5" stroke="#e02020" stroke-width="1.6"/><path d="M8,8l6,4" stroke="#20a020" stroke-width="1.2"/><path d="M8,8v-6" stroke="#2040e0" stroke-width="1.2"/></svg>
<div style="left:853px;top:109px;width:24px;height:24px;background:#f2f6ea;border:1px solid #6a9a2a;"></div>
<span class="t" style="left:857px;top:108px;font-size:22px;line-height:26px;color:#6a9a2a;">S</span>
<svg style="left:896px;top:110px;" width="23" height="22" viewBox="0 0 24 24"><rect width="24" height="24" rx="1" fill="#a0a0a0"/><path d="M6,8.5h12M14.5,5l4,3.5l-4,3.5" fill="none" stroke="#fff" stroke-width="2"/><path d="M18,15.5H6M9.5,12l-4,3.5l4,3.5" fill="none" stroke="#fff" stroke-width="2"/></svg>
<svg style="left:927px;top:120px;" width="7" height="4.5" viewBox="0 0 7 4.5"><path d="M0,0h6l-3.0,3.5z" fill="#444"/></svg>
<svg style="left:951px;top:109px;" width="24" height="24" viewBox="0 0 24 24"><circle cx="12" cy="12" r="11.6" fill="#3f9a3a"/><path d="M5.5,12.5l4.5,4.5l9,-10" fill="none" stroke="#fff" stroke-width="3"/></svg>
<svg style="left:982px;top:109px;" width="24" height="24" viewBox="0 0 24 24"><circle cx="12" cy="12" r="11.6" fill="#3f9a3a"/><path d="M5,11l3.5,3.5l8.5,-9" fill="none" stroke="#fff" stroke-width="2.2"/><path d="M6.5,16l3.5,3.5l9,-10" fill="none" stroke="#fff" stroke-width="2.2"/></svg>
<svg style="left:1014px;top:110px;" width="22" height="22" viewBox="0 0 22 22"><rect width="22" height="22" fill="#3f9a3a"/><path d="M3,4.5h16M3,8.8h16M3,13.1h16M3,17.4h16" stroke="#fff" stroke-width="1.8"/></svg>
<svg style="left:1055px;top:108px;" width="25" height="25" viewBox="0 0 24 24"><g stroke="#222" stroke-width="1.2"><path d="M4,6l-3,-2M3,12H0M5,17l-3,3M17,4l3,-3M21,9l3,-1M20,16l3,2"/></g>
    <ellipse cx="11.5" cy="13" rx="8.5" ry="8" fill="#e01818" transform="rotate(-35 11.5 13)"/>
    <path d="M17.5,3.5a5,5 0 0 1 3.5,6.5l-6,-3.5z" fill="#111"/><circle cx="17.5" cy="6.5" r="3.6" fill="#111"/>
    <path d="M16,8.5L6,19.5" stroke="#111" stroke-width="1.2"/>
    <circle cx="8" cy="9.5" r="1.8" fill="#111"/><circle cx="12.5" cy="12" r="1.7" fill="#111"/><circle cx="6.5" cy="14.5" r="1.8" fill="#111"/><circle cx="13" cy="17.5" r="1.8" fill="#111"/><circle cx="17" cy="14" r="1.5" fill="#111"/></svg>
<svg style="left:1086px;top:120px;" width="7" height="4.5" viewBox="0 0 7 4.5"><path d="M0,0h6l-3.0,3.5z" fill="#222"/></svg>
<div style="left:92px;top:139px;width:210px;height:19px;background:#d9d9d9;border:1px solid #c4c4c4;"></div>
<span class="t" style="left:96px;top:142.5px;font-size:11px;line-height:15px;color:#000;letter-spacing:-0.22px;">Libraries Browser</span>
<svg style="left:273px;top:144px;" width="9" height="9" viewBox="0 0 9 9"><path d="M2.5,3v-2.3h6v5h-2.3" fill="none" stroke="#111" stroke-width="1.3"/><rect x=".7" y="3.3" width="5.4" height="5" fill="none" stroke="#111" stroke-width="1.3"/></svg>
<svg style="left:289px;top:144px;" width="9" height="9" viewBox="0 0 9 9"><path d="M.7,.7l6.6,6.6M7.3,.7l-6.6,6.6" stroke="#111" stroke-width="1.6"/></svg>
<div style="left:92px;top:162px;width:181px;height:18px;background:#fff;border:1px solid #7a7a7a;"></div>
<span class="t" style="left:95px;top:164px;font-size:11px;line-height:15px;color:#808080;letter-spacing:-0.36px;">Filter Classes</span>
<svg style="left:283px;top:164px;" width="15" height="14" viewBox="0 0 15 14"><defs><linearGradient id="ya" x1="0" y1="0" x2="0" y2="1"><stop offset="0" stop-color="#ffd030"/><stop offset="1" stop-color="#f0a010"/></linearGradient></defs><path d="M4,1h7v5.5h3.3L7.5,13.3L.7,6.5H4z" fill="url(#ya)" stroke="#e09a10" stroke-width=".7"/></svg>
<div style="left:92px;top:188px;width:210px;height:795px;background:#fff;border:1px solid #828790;"></div>
<span class="t" style="left:96px;top:193.5px;font-size:11px;line-height:15px;color:#000;letter-spacing:-0.27px;">Libraries</span>
<div style="left:93px;top:211px;width:208px;height:1px;background:#e6ecf7;"></div>
<svg style="left:94px;top:220px;" width="9" height="9" viewBox="0 0 9 9"><rect x=".5" y=".5" width="8" height="8" fill="#fff" stroke="#919191"/><path d="M2,4.5h5" stroke="#203080" stroke-width="1"/><path d="M4.5,2v5" stroke="#203080" stroke-width="1"/></svg>
<span class="t" style="left:139px;top:217px;font-size:12px;line-height:16px;color:#000;letter-spacing:0.06px;">OpenModelica</span>
<svg style="left:94px;top:244px;" width="9" height="9" viewBox="0 0 9 9"><rect x=".5" y=".5" width="8" height="8" fill="#fff" stroke="#919191"/><path d="M2,4.5h5" stroke="#203080" stroke-width="1"/><path d="M4.5,2v5" stroke="#203080" stroke-width="1"/></svg>
<span class="t" style="left:139px;top:241px;font-size:12px;line-height:16px;color:#000;letter-spacing:-0.12px;">ModelicaReference</span>
<svg style="left:94px;top:268px;" width="9" height="9" viewBox="0 0 9 9"><rect x=".5" y=".5" width="8" height="8" fill="#fff" stroke="#919191"/><path d="M2,4.5h5" stroke="#203080" stroke-width="1"/><path d="M4.5,2v5" stroke="#203080" stroke-width="1"/></svg>
<span class="t" style="left:139px;top:265px;font-size:12px;line-height:16px;color:#000;letter-spacing:-0.20px;">ModelicaServices</span>
<svg style="left:94px;top:292px;" width="9" height="9" viewBox="0 0 9 9"><rect x=".5" y=".5" width="8" height="8" fill="#fff" stroke="#919191"/><path d="M2,4.5h5" stroke="#203080" stroke-width="1"/><path d="M4.5,2v5" stroke="#203080" stroke-width="1"/></svg>
<span class="t" style="left:139px;top:289px;font-size:12px;line-height:16px;color:#000;letter-spacing:0.02px;">Complex</span>
<svg style="left:94px;top:316px;" width="9" height="9" viewBox="0 0 9 9"><rect x=".5" y=".5" width="8" height="8" fill="#fff" stroke="#919191"/><path d="M2,4.5h5" stroke="#203080" stroke-width="1"/><path d="M4.5,2v5" stroke="#203080" stroke-width="1"/></svg>
<span class="t" style="left:139px;top:313px;font-size:12px;line-height:16px;color:#000;letter-spacing:0.14px;">Modelica</span>
<svg style="left:94px;top:340px;" width="9" height="9" viewBox="0 0 9 9"><rect x=".5" y=".5" width="8" height="8" fill="#fff" stroke="#919191"/><path d="M2,4.5h5" stroke="#203080" stroke-width="1"/></svg>
<span class="t" style="left:139px;top:337px;font-size:12px;line-height:16px;color:#000;letter-spacing:0.13px;">InvertOpAmp</span>
<div style="left:109px;top:212px;width:24px;height:24px;background:#fff;border:1px solid #7a0c0c;outline:1px solid #a84040;outline-offset:-2px;"></div>
<span class="t" style="left:113.5px;top:211px;font-size:22px;line-height:26px;color:#7a0c0c;font-weight:bold;font-family:'Liberation Serif',serif;">P</span>
<svg style="left:111px;top:238px;" width="20" height="20" viewBox="0 0 20 20"><circle cx="10" cy="10" r="9.8" fill="#3f8a45"/><text x="10" y="15.5" font-size="15" font-style="italic" font-weight="bold" font-family="Liberation Serif" fill="#fff" text-anchor="middle">i</text></svg>
<svg style="left:111px;top:262px;" width="20" height="20" viewBox="0 0 20 20"><defs><linearGradient id="gs" x1="0" y1="0" x2="0" y2="1"><stop offset="0" stop-color="#f4f4f4"/><stop offset=".5" stop-color="#d6d6d6"/><stop offset="1" stop-color="#fafafa"/></linearGradient></defs><rect x=".5" y=".5" width="19" height="19" rx="2.5" fill="url(#gs)" stroke="#9a9a9a"/></svg>
<svg style="left:111px;top:286px;" width="20" height="20" viewBox="0 0 20 20"><rect x=".3" y=".3" width="19.4" height="19.4" rx="2.5" fill="#9a9a9e"/><text x="10" y="13" font-size="8" font-family="Liberation Sans" fill="#fff" text-anchor="middle">C</text></svg>
<svg style="left:111px;top:310px;" width="20" height="20" viewBox="0 0 20 20"><rect x=".5" y=".5" width="19" height="19" rx="2.5" fill="url(#gs)" stroke="#8a8a8a"/><path d="M2.5,13.5l4,-7.5q1,.5 0,4q2,-4.5 3.5,-4q.5,1 -.5,4q2.5,-4.5 4,-4q1,1.500 -.5,5" fill="none" stroke="#111" stroke-width="1"/><circle cx="14" cy="13.5" r="1.4" fill="#c01010"/></svg>
<div style="left:109px;top:332px;width:24px;height:24px;background:#fff;border:2px solid #1f3fff;"></div>
<span class="t" style="left:112.5px;top:331.5px;font-size:21px;line-height:25px;color:#1030e0;font-weight:bold;font-family:'Liberation Serif',serif;">M</span>
<div style="left:122px;top:357px;width:24px;height:24px;background:#fff;border:1px solid #e01010;box-shadow:inset 0 0 0 1px #f08080;"></div>
<span class="t" style="left:126.5px;top:357px;font-size:23px;line-height:27px;color:#e01010;font-weight:bold;font-family:'Liberation Serif',serif;">T</span>
<span class="t" style="left:152.5px;top:361px;font-size:12px;line-height:16px;color:#000;letter-spacing:-0.09px;">Current</span>
<div style="left:122px;top:381px;width:24px;height:24px;background:#fff;border:1px solid #e01010;box-shadow:inset 0 0 0 1px #f08080;"></div>
<span class="t" style="left:126.5px;top:381px;font-size:23px;line-height:27px;color:#e01010;font-weight:bold;font-family:'Liberation Serif',serif;">T</span>
<span class="t" style="left:152.5px;top:385px;font-size:12px;line-height:16px;color:#000;letter-spacing:-0.09px;">Voltage</span>
<svg style="left:124px;top:406px;" width="20" height="20" viewBox="0 0 20 20"><rect x=".5" y=".5" width="19" height="19" fill="#fff" stroke="#2a0808"/><path d="M1,1l18,18M19,1L1,19" stroke="#f04040" stroke-width=".8"/></svg>
<span class="t" style="left:152.5px;top:409px;font-size:12px;line-height:16px;color:#000;letter-spacing:-0.09px;">ConservedQuantityKind</span>
<svg style="left:124px;top:430px;" width="20" height="20" viewBox="0 0 20 20"><rect x=".5" y=".5" width="19" height="19" fill="#fff" stroke="#2a0808"/><path d="M1,1l18,18M19,1L1,19" stroke="#f04040" stroke-width=".8"/></svg>
<span class="t" style="left:152.5px;top:433px;font-size:12px;line-height:16px;color:#000;letter-spacing:-0.27px;">Charge</span>
<svg style="left:124px;top:454px;" width="20" height="20" viewBox="0 0 20 20"><rect x=".5" y=".5" width="19" height="19" fill="#fff" stroke="#2a0808"/><path d="M1,1l18,18M19,1L1,19" stroke="#f04040" stroke-width=".8"/></svg>
<span class="t" style="left:152.5px;top:457px;font-size:12px;line-height:16px;color:#000;letter-spacing:-0.06px;">FlowingCharge</span>
<div style="left:124px;top:478px;width:20px;height:20px;background:#dedede;border:1px solid #6a6a6a;"></div>
<span class="t" style="left:152.5px;top:481px;font-size:12px;line-height:16px;color:#000;letter-spacing:-0.17px;">ChargeFlowElement</span>
<div style="left:124px;top:502px;width:20px;height:20px;background:#dedede;border:1px solid #6a6a6a;"></div>
<span class="t" style="left:152.5px;top:505px;font-size:12px;line-height:16px;color:#000;letter-spacing:-0.32px;">RealSignalElement</span>
<div style="left:124px;top:526px;width:20px;height:20px;background:#dedede;border:1px solid #6a6a6a;"></div>
<span class="t" style="left:152.5px;top:529px;font-size:12px;line-height:16px;color:#000;letter-spacing:-0.28px;">RealInSignalElement</span>
<div style="left:124px;top:550px;width:20px;height:20px;background:#dedede;border:1px solid #6a6a6a;"></div>
<span class="t" style="left:152.5px;top:553px;font-size:12px;line-height:16px;color:#000;letter-spacing:-0.23px;">RealOutSignalElement</span>
<div style="left:119px;top:572px;width:182px;height:24px;background:#f1f1f1;"></div>
<svg style="left:134px;top:583px;" width="13" height="13" viewBox="0 0 13 13"><path d="M.5,13V.5h12" fill="none" stroke="#555" stroke-width="1"/></svg>
<span class="t" style="left:152px;top:577px;font-size:12px;line-height:16px;color:#000;letter-spacing:0.08px;">InvertOpAmp</span>
<div style="left:307px;top:140px;width:598px;height:24px;background:#fff;"></div>
<div style="left:306px;top:140px;width:1px;height:24px;background:#c8c8c8;"></div>
<div style="left:306px;top:139px;width:599px;height:1px;background:#c8c8c8;"></div>
<div style="left:904px;top:140px;width:1px;height:24px;background:#c8c8c8;"></div>
<div style="left:905px;top:163px;width:599px;height:1px;background:#c8c8c8;"></div>
<svg style="left:318px;top:143px;" width="17" height="17" viewBox="0 0 16 16"><g fill="none" stroke="#1a3fb0" stroke-width="1.6"><circle cx="3.5" cy="11.5" r="2.3"/><circle cx="11" cy="2.8" r="1.7" stroke="#3a5fc8" stroke-width="1.2"/></g>
    <path d="M5.5,10.5L8,8M10.3,4.5L9.3,7M11.3,4.5L13.5,12" stroke="#1a2f90" stroke-width="1.5" fill="none"/>
    <circle cx="9.3" cy="9.3" r="2.6" fill="#c9d4ee" stroke="#8090c0" stroke-width="1"/><circle cx="13.6" cy="12.8" r="1.5" fill="#1a3fb0"/><path d="M6,12.5l6,.8" stroke="#1a2f90" stroke-width="1.3"/></svg>
<span class="t" style="left:572px;top:144.5px;font-size:11px;line-height:15px;color:#000;letter-spacing:0.02px;">InvertOpAmp</span>
<svg style="left:877px;top:144px;" width="15" height="15" viewBox="0 0 15 15"><rect x=".7" y=".7" width="13.6" height="13.6" rx="1.5" fill="#e8705a" stroke="#c03a28" stroke-width="1.2"/><path d="M4.3,4.3l6.4,6.4M10.7,4.3l-6.4,6.4" stroke="#fff" stroke-width="2"/></svg>
<div style="left:306px;top:163px;width:1198px;height:27px;background:#d6d6d6;border:1px solid #8e8e8e;border-bottom-color:#a0a0a0;"></div>
<div style="left:307px;top:164px;width:1196px;height:1px;background:#a4a4a4;"></div>
<svg style="left:311px;top:169px;" width="17" height="15" viewBox="0 0 17 15"><path d="M0,7.5h17M1,4v7M16,4v7" stroke="#000" stroke-width="1.6"/><rect x="4.5" y=".5" width="8" height="14" fill="#2040c0" stroke="#102080"/></svg>
<div style="left:331px;top:166px;width:23px;height:22px;background:#9fc2e8;border:1px solid #5a9ae0;"></div>
<svg style="left:334px;top:169px;" width="17" height="17" viewBox="0 0 16 16"><g fill="none" stroke="#1a3fb0" stroke-width="1.6"><circle cx="3.5" cy="11.5" r="2.3"/><circle cx="11" cy="2.8" r="1.7" stroke="#3a5fc8" stroke-width="1.2"/></g>
    <path d="M5.5,10.5L8,8M10.3,4.5L9.3,7M11.3,4.5L13.5,12" stroke="#1a2f90" stroke-width="1.5" fill="none"/>
    <circle cx="9.3" cy="9.3" r="2.6" fill="#c9d4ee" stroke="#8090c0" stroke-width="1"/><circle cx="13.6" cy="12.8" r="1.5" fill="#1a3fb0"/><path d="M6,12.5l6,.8" stroke="#1a2f90" stroke-width="1.3"/></svg>
<svg style="left:357px;top:169px;" width="16" height="16" viewBox="0 0 16 16"><rect width="16" height="16" fill="#2040c0"/><path d="M2,3.5h12M2,6.5h9M2,9.500h12M2,12.500h9" stroke="#fff" stroke-width="1.4"/></svg>
<svg style="left:380px;top:169px;" width="16" height="16" viewBox="0 0 16 16"><circle cx="8" cy="8" r="7.8" fill="#1e3fc4"/><text x="8" y="13" font-size="13" font-weight="bold" font-family="Liberation Serif" fill="#fff" text-anchor="middle">i</text></svg>
<div style="left:404px;top:165px;width:1px;height:24px;background:#a0a0a0;"></div>
<div style="left:405px;top:165px;width:1px;height:24px;background:#e4e4e4;"></div>
<div style="left:457px;top:165px;width:1px;height:24px;background:#a0a0a0;"></div>
<div style="left:458px;top:165px;width:1px;height:24px;background:#e4e4e4;"></div>
<div style="left:498px;top:165px;width:1px;height:24px;background:#a0a0a0;"></div>
<div style="left:499px;top:165px;width:1px;height:24px;background:#e4e4e4;"></div>
<div style="left:575px;top:165px;width:1px;height:24px;background:#a0a0a0;"></div>
<div style="left:576px;top:165px;width:1px;height:24px;background:#e4e4e4;"></div>
<div style="left:722px;top:165px;width:1px;height:24px;background:#a0a0a0;"></div>
<div style="left:723px;top:165px;width:1px;height:24px;background:#e4e4e4;"></div>
<div style="left:1479px;top:165px;width:1px;height:24px;background:#a0a0a0;"></div>
<div style="left:1480px;top:165px;width:1px;height:24px;background:#e4e4e4;"></div>
<span class="t" style="left:409.5px;top:169.5px;font-size:11px;line-height:15px;color:#000;letter-spacing:-0.09px;">Writable</span>
<span class="t" style="left:462.5px;top:169.5px;font-size:11px;line-height:15px;color:#000;letter-spacing:-0.49px;">Model</span>
<span class="t" style="left:503.5px;top:169.5px;font-size:11px;line-height:15px;color:#000;letter-spacing:-0.39px;">Diagram View</span>
<span class="t" style="left:580.5px;top:169.5px;font-size:11px;line-height:15px;color:#000;letter-spacing:0.06px;">InvertOpAmp.InvertOpAmp</span>
<span class="t" style="left:727.5px;top:169.5px;font-size:11px;line-height:15px;color:#000;letter-spacing:-0.23px;">C:/Users/user/AppData/Roaming/Sparx Systems/EA/MDGModelica/Simulation/EAID_83EE6216_A8F7_4e21_8FF6_22C08310BF6E/Solve.mo</span>
<svg style="left:1486px;top:170px;" width="12" height="14" viewBox="0 0 12 14"><path d="M3,7V4.500a3,3 0 0 1 5.800,-1" fill="none" stroke="#b8b8b8" stroke-width="1.6"/><rect x="1" y="7" width="10" height="7" rx="1" fill="#b8b8b8"/><rect x="5.300" y="9" width="1.400" height="3" fill="#d6d6d6"/></svg>
<div style="left:306px;top:194px;width:1198px;height:635px;background:#f2f2f2;border:1px solid #828790;"></div>
<svg style="left:0;top:0" width="1920" height="1080" viewBox="0 0 1920 1080"><rect x="308" y="196" width="1087" height="582" fill="#fff"/><path d="M314.40,195V811M343.66,195V811M372.93,195V811M402.19,195V811M431.46,195V811M460.72,195V811M489.99,195V811M519.25,195V811M548.52,195V811M577.78,195V811M607.05,195V811M636.32,195V811M665.58,195V811M694.85,195V811M724.11,195V811M753.38,195V811M782.64,195V811M811.90,195V811M841.17,195V811M870.43,195V811M899.70,195V811M928.97,195V811M958.23,195V811M987.50,195V811M1016.76,195V811M1046.03,195V811M1075.29,195V811M1104.55,195V811M1133.82,195V811M1163.09,195V811M1192.35,195V811M1221.62,195V811M1250.88,195V811M1280.14,195V811M1309.41,195V811M1338.68,195V811M1367.94,195V811M1397.20,195V811M1426.47,195V811M1455.74,195V811M1485.00,195V811M307,209.30H1486M307,238.58H1486M307,267.86H1486M307,297.14H1486M307,326.42H1486M307,355.70H1486M307,384.98H1486M307,414.26H1486M307,443.54H1486M307,472.82H1486M307,502.10H1486M307,531.38H1486M307,560.66H1486M307,589.94H1486M307,619.22H1486M307,648.50H1486M307,677.78H1486M307,707.06H1486M307,736.34H1486M307,765.62H1486M307,794.90H1486" stroke="#e3e3e3" stroke-width="1" fill="none" shape-rendering="crispEdges"/><rect x="328.5" y="376.5" width="161" height="170" fill="#fff" stroke="#00007f"/><path d="M345.5,404V530M336.5,461.5H465" stroke="#c0c0c0" stroke-width="1" fill="none"/><path d="M339,404L345.500,385L352,404M465,455.500L481,461.500L465,467.500" stroke="#e2e2e2" stroke-width="1" fill="none" stroke-dasharray="2,1"/><polyline points="345.5,461.3 347.5,454.7 349.5,448.1 351.5,441.7 353.5,435.5 355.5,429.5 357.5,423.8 359.5,418.5 361.5,413.6 363.5,409.1 365.5,405.2 367.6,401.8 369.6,398.9 371.6,396.7 373.6,395.1 375.6,394.1 377.6,393.8 379.6,394.1 381.6,395.1 383.6,396.7 385.6,398.9 387.6,401.8 389.6,405.2 391.6,409.1 393.6,413.6 395.6,418.5 397.6,423.8 399.6,429.5 401.6,435.5 403.6,441.7 405.6,448.1 407.6,454.7 409.6,461.3 411.7,467.9 413.7,474.5 415.7,480.9 417.7,487.1 419.7,493.1 421.7,498.8 423.7,504.1 425.7,509.0 427.7,513.5 429.7,517.4 431.7,520.8 433.7,523.7 435.7,525.9 437.7,527.5 439.7,528.5 441.7,528.8 443.7,528.5 445.7,527.5 447.7,525.9 449.7,523.7 451.7,520.8 453.8,517.4 455.8,513.5 457.8,509.0 459.8,504.1 461.8,498.8 463.8,493.1 465.8,487.1 467.8,480.9 469.8,474.5 471.8,467.9 473.8,461.3" fill="none" stroke="#000" stroke-width="1"/><path d="M490,453L506.800,461.300L490,469.500" fill="#fff" stroke="#00007f"/><path d="M501.500,454.500H565" stroke="#000" fill="none"/><rect x="567" y="435" width="16" height="9" fill="#0000ff"/><path d="M583,439.500H715" stroke="#0000ff" fill="none"/><ellipse cx="648.500" cy="439.500" rx="36.800" ry="21.500" fill="none" stroke="#0000ff"/><path d="M589.500,431H605M597.200,426V436.500M693.500,430.500H707.500" stroke="#0000ff" fill="none"/><rect x="715.500" y="435.500" width="15" height="8" fill="#fff" stroke="#0000ff"/><path d="M633.500,377.500H663.500L648.500,395z" fill="#00007f" stroke="#00007f"/><path d="M734.500,423V433.500H817" stroke="#000" fill="none"/><path d="M734.500,455.500H774.500V652" stroke="#000" fill="none"/><rect x="819.500" y="433" width="14.500" height="13" fill="#0000ff"/><path d="M834,439.500H848M947.500,439.500H961" stroke="#0000ff" fill="none"/><rect x="848.500" y="421.500" width="99" height="36" fill="#fff" stroke="#0000ff"/><rect x="961.500" y="433.500" width="14" height="12" fill="#fff" stroke="#0000ff"/><rect x="890" y="492" width="15.500" height="12" fill="#bf0000"/><path d="M980,402.500H1126.500V417.500" stroke="#000" fill="none"/><path d="M1107,293.500H1055.500V426.500H1126.500" stroke="#000" fill="none"/><rect x="1107.500" y="284" width="16.500" height="13.500" fill="#0000ff"/><path d="M1124,291H1139M1252.500,291H1268" stroke="#0000ff" fill="none"/><rect x="1139.500" y="272.500" width="113" height="36.500" fill="#fff" stroke="#0000ff"/><rect x="1268.500" y="284.500" width="16" height="12.500" fill="#fff" stroke="#0000ff"/><rect x="1187" y="347" width="16.500" height="12.500" fill="#bf0000"/><path d="M1287.500,291.500H1343.500V445.500H1265" stroke="#000" fill="none"/><path d="M1154.500,407.500V483.500L1237,445.500z" fill="#fff" fill-opacity="0" stroke="#0000ff"/><rect x="1131.500" y="411.500" width="11" height="10" fill="#fff" stroke="#0000ff"/><rect x="1131.500" y="469.500" width="11.500" height="10.500" fill="#0000ff"/><path d="M1143,416.500H1154M1143,474.500H1154M1237,445.500H1248" stroke="#0000ff" fill="none"/><rect x="1248" y="440" width="12.800" height="10.800" fill="#0000ff"/><path d="M1160,421.500H1173M1160,469.500H1173M1166.500,463V476" stroke="#0000ff" fill="none"/><path d="M1126.500,478.500H1088.500V657.500H782.500" stroke="#000" fill="none"/><rect x="763.500" y="658.500" width="12.500" height="7" fill="#0000ff"/><path d="M769.500,665V677.500M735,677.500H804M746,683.500H793M758,689.500H782" stroke="#0000ff" fill="none"/></svg>
<span class="t" style="left:337.8px;top:336.25px;font-size:28.5px;line-height:32.5px;color:#0000ff;letter-spacing:-0.48px;">SineSource</span>
<span class="t" style="left:330px;top:559.25px;font-size:27.5px;line-height:31.5px;color:#000;letter-spacing:1.04px;">freqHz=1 Hz</span>
<span class="t" style="left:629px;top:401px;font-size:14px;line-height:18px;color:#0000ff;letter-spacing:-0.18px;">Signal</span>
<span class="t" style="left:882px;top:387.05px;font-size:19.5px;line-height:23.5px;color:#0000ff;letter-spacing:0.62px;">Rin</span>
<span class="t" style="left:836.8px;top:464px;font-size:20px;line-height:24px;color:#000;letter-spacing:0.28px;">R=1000 Ohm</span>
<span class="t" style="left:1184.3px;top:235.5px;font-size:20px;line-height:24px;color:#0000ff;letter-spacing:1.00px;">Rf</span>
<span class="t" style="left:1131.8px;top:317.5px;font-size:20px;line-height:24px;color:#000;letter-spacing:0.72px;">R=3300 Ohm</span>
<span class="t" style="left:1171px;top:383.5px;font-size:16px;line-height:20px;color:#0000ff;letter-spacing:-0.23px;">LM741</span>
<span class="t" style="left:754.5px;top:695.05px;font-size:10.5px;line-height:14.5px;color:#0000ff;letter-spacing:0.72px;">Earth</span>
<div style="left:1486px;top:195px;width:17px;height:616px;background:#f0f0f0;"></div>
<svg style="left:1490px;top:200px;" width="9" height="7" viewBox="0 0 9 7"><path d="M1,5.500L4.500,1.800L8,5.500" fill="none" stroke="#505050" stroke-width="1.800"/></svg>
<div style="left:1487px;top:214px;width:16px;height:398px;background:#cdcdcd;"></div>
<svg style="left:1490px;top:799px;" width="9" height="7" viewBox="0 0 9 7"><path d="M1,1.500L4.500,5.200L8,1.500" fill="none" stroke="#505050" stroke-width="1.800"/></svg>
<div style="left:307px;top:811px;width:1196px;height:17px;background:#f0f0f0;"></div>
<svg style="left:311px;top:815px;" width="7" height="9" viewBox="0 0 7 9"><path d="M5.500,1L1.800,4.500L5.500,8" fill="none" stroke="#505050" stroke-width="1.800"/></svg>
<div style="left:324px;top:812px;width:821px;height:15px;background:#cdcdcd;"></div>
<svg style="left:1474px;top:815px;" width="7" height="9" viewBox="0 0 7 9"><path d="M1.500,1L5.200,4.500L1.500,8" fill="none" stroke="#505050" stroke-width="1.800"/></svg>
<div style="left:306px;top:834px;width:1198px;height:19px;background:#dbdbdb;border:1px solid #c4c4c4;"></div>
<span class="t" style="left:310.5px;top:837.5px;font-size:11px;line-height:15px;color:#000;letter-spacing:-0.34px;">Messages Browser</span>
<svg style="left:1475px;top:840px;" width="9" height="9" viewBox="0 0 9 9"><path d="M2.5,3v-2.3h6v5h-2.3" fill="none" stroke="#111" stroke-width="1.3"/><rect x=".7" y="3.3" width="5.4" height="5" fill="none" stroke="#111" stroke-width="1.3"/></svg>
<svg style="left:1491px;top:840px;" width="9" height="9" viewBox="0 0 9 9"><path d="M.7,.7l6.6,6.6M7.3,.7l-6.6,6.6" stroke="#111" stroke-width="1.6"/></svg>
<div style="left:306px;top:875px;width:1196px;height:107px;background:#fff;border:1px solid #a0a0a0;"></div>
<div style="left:306px;top:855px;width:37px;height:22px;background:#fff;border:1px solid #adadad;border-bottom:none;"></div>
<span class="t" style="left:317.5px;top:858.5px;font-size:11px;line-height:15px;color:#000;letter-spacing:-0.62px;">All</span>
<div style="left:342px;top:857px;width:83px;height:19px;background:#f0f0f0;border:1px solid #adadad;"></div>
<span class="t" style="left:352px;top:859.5px;font-size:11px;line-height:15px;color:#000;letter-spacing:-0.04px;">Notifications</span>
<div style="left:423px;top:857px;width:71px;height:19px;background:#f0f0f0;border:1px solid #adadad;"></div>
<span class="t" style="left:435.5px;top:859.5px;font-size:11px;line-height:15px;color:#000;letter-spacing:-0.15px;">Warnings</span>
<div style="left:492px;top:857px;width:53px;height:19px;background:#f0f0f0;border:1px solid #adadad;"></div>
<span class="t" style="left:504.5px;top:859.5px;font-size:11px;line-height:15px;color:#000;letter-spacing:-0.19px;">Errors</span>
<div style="left:1131px;top:986px;width:1px;height:24px;background:#d8d8d8;"></div>
<div style="left:1484px;top:986px;width:1px;height:24px;background:#d8d8d8;"></div>
<div style="left:1137px;top:986px;width:85px;height:22px;background:#f0f0f0;border:1px solid #adadad;"></div>
<svg style="left:1147px;top:989px;" width="17" height="16" viewBox="0 0 17 16"><path d="M2,3q5,-3 7,1q-3,1 -2,5l6,3v3H4q-3,-6 -2,-12z" fill="#555"/><path d="M9,2q4,-1 5,2" fill="none" stroke="#555" stroke-width="1.500"/><rect x="5" y="12.500" width="10" height="3" rx="1.300" fill="#333"/></svg>
<span class="t" style="left:1167.5px;top:991px;font-size:11px;line-height:15px;color:#000;letter-spacing:-0.53px;">Welcome</span>
<div style="left:1221px;top:986px;width:91px;height:24px;background:#fff;border:1px solid #adadad;border-top-color:#fdfdfd;"></div>
<svg style="left:1235px;top:990px;" width="17" height="17" viewBox="0 0 16 16"><g fill="none" stroke="#1a3fb0" stroke-width="1.6"><circle cx="3.5" cy="11.5" r="2.3"/><circle cx="11" cy="2.8" r="1.7" stroke="#3a5fc8" stroke-width="1.2"/></g>
    <path d="M5.5,10.5L8,8M10.3,4.5L9.3,7M11.3,4.5L13.5,12" stroke="#1a2f90" stroke-width="1.5" fill="none"/>
    <circle cx="9.3" cy="9.3" r="2.6" fill="#c9d4ee" stroke="#8090c0" stroke-width="1"/><circle cx="13.6" cy="12.8" r="1.5" fill="#1a3fb0"/><path d="M6,12.5l6,.8" stroke="#1a2f90" stroke-width="1.3"/></svg>
<span class="t" style="left:1254.5px;top:992px;font-size:11px;line-height:15px;color:#000;letter-spacing:-0.45px;">Modeling</span>
<div style="left:1311px;top:986px;width:79px;height:22px;background:#f0f0f0;border:1px solid #adadad;"></div>
<svg style="left:1321px;top:989px;" width="16" height="15" viewBox="0 0 16 15"><rect width="16" height="15" rx="2" fill="#2a70e0"/><rect x="2" y="2.500" width="12" height="4" fill="#7ab0f4"/><rect x="2" y="8.500" width="12" height="4" fill="#a8cdf8"/><path d="M3,5l2,-1.500l2,1.500l2,-1.500l2,1.500l2,-1.500" fill="none" stroke="#fff" stroke-width=".8"/></svg>
<span class="t" style="left:1340px;top:991px;font-size:11px;line-height:15px;color:#000;letter-spacing:-0.03px;">Plotting</span>
<div style="left:1389px;top:986px;width:94px;height:22px;background:#f0f0f0;border:1px solid #adadad;"></div>
<svg style="left:1400px;top:988px;" width="17" height="17" viewBox="0 0 24 24"><g stroke="#222" stroke-width="1.2"><path d="M4,6l-3,-2M3,12H0M5,17l-3,3M17,4l3,-3M21,9l3,-1M20,16l3,2"/></g>
    <ellipse cx="11.5" cy="13" rx="8.5" ry="8" fill="#e01818" transform="rotate(-35 11.5 13)"/>
    <path d="M17.5,3.5a5,5 0 0 1 3.5,6.5l-6,-3.5z" fill="#111"/><circle cx="17.5" cy="6.5" r="3.6" fill="#111"/>
    <path d="M16,8.5L6,19.5" stroke="#111" stroke-width="1.2"/>
    <circle cx="8" cy="9.5" r="1.8" fill="#111"/><circle cx="12.5" cy="12" r="1.7" fill="#111"/><circle cx="6.5" cy="14.5" r="1.8" fill="#111"/><circle cx="13" cy="17.5" r="1.8" fill="#111"/><circle cx="17" cy="14" r="1.5" fill="#111"/></svg>
<span class="t" style="left:1420px;top:991px;font-size:11px;line-height:15px;color:#000;letter-spacing:-0.21px;">Debugging</span>
<svg style="left:1493px;top:1001px;" width="10" height="10" viewBox="0 0 10 10"><rect x="0.0" y="7.0" width="2" height="2" fill="#b8b8b8"/><rect x="3.5" y="3.5" width="2" height="2" fill="#b8b8b8"/><rect x="3.5" y="7.0" width="2" height="2" fill="#b8b8b8"/><rect x="7.0" y="0.0" width="2" height="2" fill="#b8b8b8"/><rect x="7.0" y="3.5" width="2" height="2" fill="#b8b8b8"/><rect x="7.0" y="7.0" width="2" height="2" fill="#b8b8b8"/></svg>
<svg style="left:146px;top:590px;" width="14" height="20" viewBox="0 0 14 20"><path d="M1,1v15.500l3.800,-3.500l2.700,6l2.300,-1l-2.700,-6h5z" fill="#fff" stroke="#111" stroke-width="1"/></svg>
</body></html>
